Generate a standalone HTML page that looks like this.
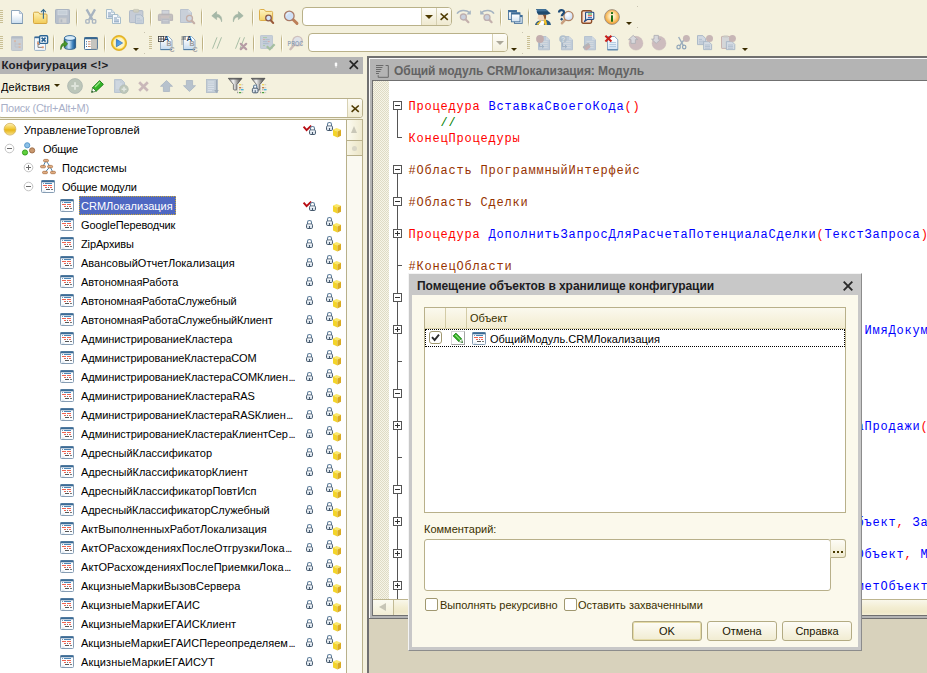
<!DOCTYPE html>
<html lang="ru"><head><meta charset="utf-8"><title>Конфигуратор</title>
<style>
html,body{margin:0;padding:0}
body{width:927px;height:673px;overflow:hidden;position:relative;background:#f4f1de;font-family:"Liberation Sans",sans-serif;font-size:11px;color:#000}
div,span,svg{position:absolute;box-sizing:border-box}
svg{overflow:visible}
.t{white-space:pre;line-height:19px;height:19px}
.n{transform:scaleY(1.07);transform-origin:0 50%}
.btn span{position:static;display:inline-block;transform:scaleY(1.07)}
.row{left:0;width:347px;height:19px}
.code{font-family:"Liberation Mono",monospace;font-size:12px;letter-spacing:0.8px;line-height:16px;height:16px;white-space:pre;left:408.5px}
.r{color:#ff0000}.b{color:#0000ff}.g{color:#008000}.br{color:#963200}
.code span{position:static}
.sep{width:1px;height:20px;background:#cfc8a8;box-shadow:1px 0 0 #fffef6}
.btn{height:20px;width:70px;border:1px solid #b3ab83;border-radius:3px;background:linear-gradient(#fdfcf6,#f1ecd2);text-align:center;line-height:18px;font-size:11px;top:621px;color:#1a1400}
.cb{width:13px;height:13px;border:1px solid #a09870;border-radius:2px;background:#fff}
</style></head><body>

<div style="left:0px;top:10px;width:3px;height:13px;background:repeating-linear-gradient(#c9bf94 0 1px,transparent 1px 2px)"></div>
<div style="left:0px;top:36px;width:3px;height:13px;background:repeating-linear-gradient(#c9bf94 0 1px,transparent 1px 2px)"></div>
<svg style="left:11px;top:10px" width="12" height="14" viewBox="0 0 12 14"><defs><linearGradient id="nd" x1="0" y1="0" x2="0" y2="1"><stop offset="0.3" stop-color="#ffffff"/><stop offset="1" stop-color="#c9ddef"/></linearGradient></defs><path d="M0.5 0.5H8.4L11.5 3.6V13.5H0.5Z" fill="url(#nd)" stroke="#8fa6bc" stroke-width="1"/><path d="M8.4 0.5V3.6H11.5Z" fill="#d6e2ee" stroke="#9fb3c6" stroke-width="0.8"/><path d="M0.5 13.5H11.5" stroke="#6d8ba6" stroke-width="1"/></svg>
<svg style="left:33px;top:9px" width="15" height="15" viewBox="0 0 15 15"><defs><linearGradient id="of" x1="0" y1="0" x2="0" y2="1"><stop offset="0" stop-color="#fdf2b6"/><stop offset="1" stop-color="#f2cb58"/></linearGradient></defs><path d="M0.5 4.4Q0.5 3.2 1.6 3.2H5.4L6.8 5H13Q14 5 14 6V13.6Q14 14.5 13 14.5H1.5Q0.5 14.5 0.5 13.6Z" fill="url(#of)" stroke="#d6a740" stroke-width="1"/><path d="M10.4 9.8V1" stroke="#356a8e" stroke-width="1.1"/><path d="M8 3.2L10.4 0.6L12.8 3.2" fill="none" stroke="#356a8e" stroke-width="1.1"/></svg>
<svg style="left:55px;top:9px" width="15" height="15" viewBox="0 0 15 15"><rect x="0.5" y="0.5" width="14" height="14" rx="0.8" fill="#b7bfcb" stroke="#aab4c1" stroke-width="1"/><rect x="3" y="1.5" width="9" height="4.2" fill="#c6cfd8" stroke="#d3dae1" stroke-width="0.8"/><rect x="4" y="9" width="7.5" height="5" fill="#cfd1d3" stroke="#c2c6cb" stroke-width="0.8"/><rect x="5.5" y="10.3" width="1.8" height="3" fill="#b3b9c2"/></svg>
<div style="left:76px;top:8px;width:1px;height:19px;background:linear-gradient(rgba(190,178,130,0),#bfb385 25%,#bfb385 75%,rgba(190,178,130,0))"></div><div style="left:77px;top:8px;width:1px;height:19px;background:linear-gradient(rgba(255,255,255,0),#fffef8 25%,#fffef8 75%,rgba(255,255,255,0))"></div>
<svg style="left:85px;top:9px" width="12" height="15" viewBox="0 0 12 15"><path d="M1.6 0.4L7.4 10.6M10 0.4L4.2 10.6" stroke="#a7b3c0" stroke-width="2.3" fill="none"/><rect x="0.8" y="10.6" width="3.4" height="3.6" rx="1" fill="none" stroke="#a7b3c0" stroke-width="1.3"/><rect x="7.4" y="10.6" width="3.4" height="3.6" rx="1" fill="none" stroke="#a7b3c0" stroke-width="1.3"/></svg>
<svg style="left:106px;top:9px" width="15" height="15" viewBox="0 0 15 15"><path d="M0.5 0.5H5.6L8.5 3.4V9.5H0.5Z" fill="#f2f6fb" stroke="#9fb8c6" stroke-width="0.9"/><path d="M5.6 0.5V3.4H8.5" fill="#dbe4ee" stroke="#9fb8c6" stroke-width="0.7"/><path d="M2 4H5M2 6H6.5M2 7.8H6.5" stroke="#6f8fb0" stroke-width="0.9"/><path d="M6.5 5.5H11.6L14.5 8.4V14.5H6.5Z" fill="#f6f9fd" stroke="#9fb8c6" stroke-width="0.9"/><path d="M11.6 5.5V8.4H14.5" fill="#dbe4ee" stroke="#9fb8c6" stroke-width="0.7"/><path d="M8 9H11M8 11H13M8 12.8H13" stroke="#6f8fb0" stroke-width="0.9"/></svg>
<svg style="left:129px;top:9px" width="15" height="15" viewBox="0 0 15 15"><rect x="0.5" y="1.6" width="13.4" height="12" rx="0.8" fill="#c6ccd6" stroke="#aab6c4" stroke-width="0.9"/><rect x="4.4" y="0.4" width="5.4" height="2.8" rx="0.8" fill="#cfcfc0" stroke="#bdbdae" stroke-width="0.6"/><path d="M6.6 5.8H11.8L14.4 8.4V14.6H6.6Z" fill="#cdd5de" stroke="#a9b8c8" stroke-width="0.9"/><path d="M8 9.4H11M8 11.2H13M8 13H13" stroke="#b5c2d0" stroke-width="0.8"/></svg>
<div style="left:150px;top:8px;width:1px;height:19px;background:linear-gradient(rgba(190,178,130,0),#bfb385 25%,#bfb385 75%,rgba(190,178,130,0))"></div><div style="left:151px;top:8px;width:1px;height:19px;background:linear-gradient(rgba(255,255,255,0),#fffef8 25%,#fffef8 75%,rgba(255,255,255,0))"></div>
<svg style="left:158px;top:10px" width="15" height="14" viewBox="0 0 15 14"><rect x="4" y="0.4" width="7" height="4.6" fill="#d0d3d9" stroke="#b9bdc6" stroke-width="0.8"/><path d="M1.6 4.2H13.4Q14.6 4.2 14.6 5.6V10.4H0.4V5.6Q0.4 4.2 1.6 4.2Z" fill="#c4bfc0" stroke="#b0acb0" stroke-width="0.8"/><path d="M3 7H12" stroke="#d8c8c0" stroke-width="0.8"/><rect x="11.4" y="6.6" width="1" height="1" fill="#a8c8a8"/><rect x="3.6" y="9" width="7.8" height="4.4" fill="#b2b6bf" stroke="#c0c3ca" stroke-width="0.8"/><path d="M4.4 10.6H10.6M4.4 12H10.6" stroke="#d9dbe0" stroke-width="0.7"/></svg>
<svg style="left:180px;top:9px" width="16" height="16" viewBox="0 0 16 16"><path d="M0.5 0.5H8.4L11.5 3.6V13.5H0.5Z" fill="#c9d0d9" stroke="#b5c0cc" stroke-width="0.9"/><path d="M8.4 0.5V3.6H11.5Z" fill="#d9dfe6"/><path d="M11.58 11.47L14.2 14.2" stroke="#c4aea6" stroke-width="2.2" stroke-linecap="round"/><circle cx="9.5" cy="9.3" r="3" fill="#cfd6e0" stroke="#c4aea6" stroke-width="1.3"/></svg>
<div style="left:201px;top:8px;width:1px;height:19px;background:linear-gradient(rgba(190,178,130,0),#bfb385 25%,#bfb385 75%,rgba(190,178,130,0))"></div><div style="left:202px;top:8px;width:1px;height:19px;background:linear-gradient(rgba(255,255,255,0),#fffef8 25%,#fffef8 75%,rgba(255,255,255,0))"></div>
<svg style="left:211px;top:11px" width="12" height="12" viewBox="0 0 12 12"><path d="M5.6 0.6L0.8 4.8L5.6 8.6V6C8.2 5.8 9.8 7.2 10.6 10.8C11.2 6 9.4 3.6 5.6 3.2Z" fill="#a5b8a7" stroke="#9db09f" stroke-width="0.6"/></svg>
<svg style="left:232px;top:11px" width="12" height="12" viewBox="0 0 12 12"><path d="M6.4 0.6L11.2 4.8L6.4 8.6V6C3.8 5.8 2.2 7.2 1.4 10.8C0.8 6 2.6 3.6 6.4 3.2Z" fill="#a5b8a7" stroke="#9db09f" stroke-width="0.6"/></svg>
<div style="left:252px;top:8px;width:1px;height:19px;background:linear-gradient(rgba(190,178,130,0),#bfb385 25%,#bfb385 75%,rgba(190,178,130,0))"></div><div style="left:253px;top:8px;width:1px;height:19px;background:linear-gradient(rgba(255,255,255,0),#fffef8 25%,#fffef8 75%,rgba(255,255,255,0))"></div>
<svg style="left:259px;top:9px" width="16" height="16" viewBox="0 0 16 16"><defs><linearGradient id="fs" x1="0" y1="0" x2="0" y2="1"><stop offset="0" stop-color="#fdf4c4"/><stop offset="1" stop-color="#f4d36a"/></linearGradient></defs><path d="M0.5 1.4Q0.5 0.5 1.4 0.5H5.2L6.6 2.4H12.6Q13.6 2.4 13.6 3.4V10.6Q13.6 11.5 12.6 11.5H1.4Q0.5 11.5 0.5 10.6Z" fill="url(#fs)" stroke="#dcae4a" stroke-width="1"/><path d="M11.42 11.04L14.2 14" stroke="#9a5a3a" stroke-width="2" stroke-linecap="round"/><circle cx="9.5" cy="9" r="2.8" fill="#d6e4f6" stroke="#8a5a4a" stroke-width="1.3"/></svg>
<svg style="left:284px;top:10px" width="15" height="15" viewBox="0 0 15 15"><path d="M8.74 9.25L13 13.4" stroke="#bd7f58" stroke-width="2.9" stroke-linecap="round"/><circle cx="5.3" cy="5.9" r="4.8" fill="#cfe0f6" stroke="#a97a66" stroke-width="1.3"/><path d="M2.6 5.4C2.8 3.8 4 2.8 5.6 2.8" fill="none" stroke="#f4f9ff" stroke-width="1"/></svg>
<div style="left:302px;top:7px;width:150px;height:19px;border:1px solid #b9b189;border-radius:4px;background:#fff"></div>
<div style="left:421px;top:8px;width:30px;height:17px;border-left:1px solid #d6d0b2;background:linear-gradient(#fdfcf7,#efe9cf);border-radius:0 3px 3px 0"></div>
<div style="left:436px;top:8px;width:1px;height:17px;background:#d6d0b2"></div>
<div style="left:425px;top:15px;width:0;height:0;border-left:4px solid transparent;border-right:4px solid transparent;border-top:4px solid #4e3a00"></div>
<svg style="left:440px;top:13px" width="8.4" height="7.4" viewBox="0 0 8.4 7.4"><path d="M0.6 0.5L7.8 6.9M7.8 0.5L0.6 6.9" stroke="#4e3a00" stroke-width="1.6" fill="none"/></svg>
<svg style="left:456px;top:9px" width="16" height="15" viewBox="0 0 16 15"><path d="M1 4.6C3.6 0.8 10 0.6 13.6 3.6" fill="none" stroke="#a5b3c1" stroke-width="1.5"/><path d="M14.8 1.2V5.6H10.4Z" fill="#a5b3c1"/><path d="M9.48 10.16L12.4 13.2" stroke="#c4b0ac" stroke-width="2.2" stroke-linecap="round"/><circle cx="7.4" cy="8" r="3" fill="#c9d0dc" stroke="#bfb0b0" stroke-width="1.3"/></svg>
<svg style="left:479px;top:9px" width="16" height="15" viewBox="0 0 16 15"><path d="M15 4.6C12.4 0.8 6 0.6 2.4 3.6" fill="none" stroke="#a5b3c1" stroke-width="1.5"/><path d="M1.2 1.2V5.6H5.6Z" fill="#a5b3c1"/><path d="M10.08 10.57L12.6 13.2" stroke="#c4b0ac" stroke-width="2.2" stroke-linecap="round"/><circle cx="8" cy="8.4" r="3" fill="#c9d0dc" stroke="#bfb0b0" stroke-width="1.3"/></svg>
<div style="left:500px;top:8px;width:1px;height:19px;background:linear-gradient(rgba(190,178,130,0),#bfb385 25%,#bfb385 75%,rgba(190,178,130,0))"></div><div style="left:501px;top:8px;width:1px;height:19px;background:linear-gradient(rgba(255,255,255,0),#fffef8 25%,#fffef8 75%,rgba(255,255,255,0))"></div>
<svg style="left:508px;top:10px" width="15" height="14" viewBox="0 0 15 14"><defs><linearGradient id="wg" x1="0" y1="0" x2="0" y2="1"><stop offset="0.2" stop-color="#ffffff"/><stop offset="1" stop-color="#cfe0f0"/></linearGradient></defs><rect x="6.4" y="5.4" width="7.8" height="8" fill="url(#wg)" stroke="#4a739c" stroke-width="0.9"/><rect x="6.4" y="5.2" width="7.8" height="1.9" fill="#3a6a96"/><rect x="0.5" y="0.5" width="8" height="9" fill="url(#wg)" stroke="#4a739c" stroke-width="0.9"/><rect x="0.5" y="0.3" width="8" height="1.9" fill="#3a6a96"/><rect x="3.4" y="2.8" width="8.6" height="9" fill="url(#wg)" stroke="#4a739c" stroke-width="0.9"/><rect x="3.4" y="2.5999999999999996" width="8.6" height="1.9" fill="#3a6a96"/></svg>
<div style="left:528px;top:8px;width:1px;height:19px;background:linear-gradient(rgba(190,178,130,0),#bfb385 25%,#bfb385 75%,rgba(190,178,130,0))"></div><div style="left:529px;top:8px;width:1px;height:19px;background:linear-gradient(rgba(255,255,255,0),#fffef8 25%,#fffef8 75%,rgba(255,255,255,0))"></div>
<svg style="left:535px;top:8px" width="16" height="17" viewBox="0 0 16 17"><path d="M0 17C0.6 13.8 3.4 12.6 6 12.2L10.4 11.6C13.2 12.4 15.6 13.8 16 17Z" fill="#2a5a82"/><path d="M3.6 17L5.2 13L9.2 12.6L8.8 17Z" fill="#ffffff"/><path d="M8.2 11.6L10.8 11.2L12.2 16.8L9.8 17Z" fill="#f4c22a"/><path d="M1.4 16L5.4 12.6L6.2 13.6L3.2 17Z" fill="#f4c22a"/><ellipse cx="6.6" cy="8.8" rx="3.7" ry="3.9" fill="#f2d4b6"/><path d="M3 9.6L2.4 10.6L3.4 10.8Z" fill="#e6b898"/><path d="M7.6 6.2L11.2 6.4L11 10.4L9.6 11.6L8.8 8.6Z" fill="#8a5230"/><path d="M1 1.2L10.5 1L15.8 5.6L12 6.7L3.4 6.7L1.2 3.4Z" fill="#1f4a6e"/><path d="M1 1.2L10.5 1L13.2 3.3L2.2 3.4Z" fill="#3f7098"/><path d="M1.3 2V5.4" stroke="#eef2f6" stroke-width="0.9"/></svg>
<svg style="left:558px;top:9px" width="16" height="16" viewBox="0 0 16 16"><defs><radialGradient id="qg" cx="0.4" cy="0.35" r="0.7"><stop offset="0" stop-color="#ffffff"/><stop offset="1" stop-color="#c4d8f2"/></radialGradient></defs><path d="M7.42 10.41L4 14.2" stroke="#c9a080" stroke-width="2.6" stroke-linecap="round"/><circle cx="10.5" cy="7" r="4.6" fill="url(#qg)" stroke="#b08262" stroke-width="1.3"/><path d="M1 3.4C1 0.4 6 0.4 6 3.2C6 5 3.8 5.2 3.7 7.2" fill="none" stroke="#1f4c78" stroke-width="2.2"/><rect x="2.5" y="9" width="2.3" height="2.3" transform="rotate(45 3.65 10.15)" fill="#1f4c78"/></svg>
<svg style="left:581px;top:10px" width="14" height="14" viewBox="0 0 14 14"><rect x="0.8" y="0.8" width="9.8" height="12.4" rx="1.4" fill="#fce2d2" stroke="#8c4c28" stroke-width="1.4"/><path d="M5.4 2.2H12Q12.8 2.2 12.8 3V8.6Q12.8 9.4 12 9.4H6.6L3.2 11.8L4.8 9.2Q4.6 9 4.6 8.6V3Q4.6 2.2 5.4 2.2Z" fill="#f8fbfe" stroke="#1f4a84" stroke-width="1.1"/><path d="M6.8 4H11" stroke="#2a9a2a" stroke-width="1"/><path d="M6.8 5.8H11" stroke="#e03a2a" stroke-width="1"/><path d="M6.8 7.6H11" stroke="#3a6ab8" stroke-width="1"/></svg>
<svg style="left:604px;top:9px" width="16" height="16" viewBox="0 0 16 16"><defs><radialGradient id="ig" cx="0.5" cy="0.45" r="0.6"><stop offset="0" stop-color="#fffdf4"/><stop offset="0.35" stop-color="#fde4b0"/><stop offset="0.8" stop-color="#f4a83a"/><stop offset="1" stop-color="#e8922a"/></radialGradient></defs><circle cx="8" cy="8" r="7.4" fill="url(#ig)" stroke="#9a9088" stroke-width="0.9"/><rect x="7" y="6.2" width="2" height="6.6" rx="0.4" fill="#1a6e14"/><rect x="7" y="3" width="2" height="2" rx="0.5" fill="#1a6e14"/></svg>
<div style="left:626px;top:22px;width:0;height:0;border-left:3px solid transparent;border-right:3px solid transparent;border-top:3px solid #3a2c00"></div>
<div style="left:637px;top:6px;width:1px;height:1px;background:#c9c4b0"></div>
<div style="left:637px;top:27px;width:1px;height:1px;background:#c9c4b0"></div>
<svg style="left:11px;top:36px" width="12" height="15" viewBox="0 0 12 15"><rect x="0.5" y="0.5" width="11" height="14" rx="0.8" fill="#c9ced4" stroke="#bcc3ca" stroke-width="0.9"/><rect x="0.5" y="0.5" width="11" height="2" fill="#b4bcc6"/><path d="M4 5V11H8M4 8H8" stroke="#bfc2c8" stroke-width="0.9" fill="none"/><rect x="3" y="4.2" width="2" height="1.8" fill="#d6b8a8"/><rect x="7.6" y="7.2" width="2" height="1.8" fill="#d6b8a8"/><rect x="7.6" y="10.2" width="2" height="1.8" fill="#d6b8a8"/></svg>
<svg style="left:34px;top:35px" width="15" height="16" viewBox="0 0 15 16"><rect x="0.5" y="1.8" width="11" height="13.6" rx="0.8" fill="#f4f8fc" stroke="#8ea8c0" stroke-width="0.9"/><rect x="0.5" y="1.6" width="4.6" height="1.6" fill="#3a6a96"/><path d="M4 6V12.4H8M4 9.4H6" stroke="#777" stroke-width="0.9" fill="none"/><rect x="3" y="7.4" width="2" height="1.8" fill="#e0946a"/><rect x="7.8" y="11.4" width="2" height="1.8" fill="#e0946a"/><rect x="5.6" y="0.8" width="8" height="7.6" rx="1" fill="#ffffff" stroke="#2a6494" stroke-width="1.4"/><path d="M7.6 2.6L11.6 6.6M11.6 2.6L7.6 6.6" stroke="#2a6494" stroke-width="1.7"/></svg>
<div style="left:53px;top:34px;width:1px;height:19px;background:linear-gradient(rgba(190,178,130,0),#bfb385 25%,#bfb385 75%,rgba(190,178,130,0))"></div><div style="left:54px;top:34px;width:1px;height:19px;background:linear-gradient(rgba(255,255,255,0),#fffef8 25%,#fffef8 75%,rgba(255,255,255,0))"></div>
<svg style="left:60px;top:35px" width="16" height="16" viewBox="0 0 16 16"><defs><linearGradient id="db" x1="0" y1="0" x2="1" y2="0"><stop offset="0" stop-color="#2f6ea8"/><stop offset="0.4" stop-color="#cfe8fb"/><stop offset="0.75" stop-color="#3b80bc"/><stop offset="1" stop-color="#1d4f82"/></linearGradient></defs><path d="M4.4 3V12.6C4.4 15 15.6 15 15.6 12.6V3Z" fill="url(#db)" stroke="#1f527f" stroke-width="0.8"/><ellipse cx="10" cy="3" rx="5.6" ry="2.4" fill="#d9edfb" stroke="#2a6294" stroke-width="0.9"/><path d="M0.8 14.6C0.4 10.4 1.8 8.4 4.2 8V5.6L7.6 9L4.2 12.2V10.2C2.6 10.4 1.6 11.6 0.8 14.6Z" fill="#4c9a2a" stroke="#2f7218" stroke-width="0.7"/></svg>
<svg style="left:84px;top:37px" width="14" height="13" viewBox="0 0 14 13"><rect x="0.5" y="0.5" width="13" height="12" rx="0.8" fill="#ffffff" stroke="#4a7298" stroke-width="1"/><rect x="0.5" y="0.4" width="13" height="1.9" fill="#36668f"/><rect x="7.4" y="2.4" width="5.6" height="9.6" fill="#c6c5c0" stroke="#a9a9a4" stroke-width="0.5"/><rect x="2" y="4.2" width="1" height="1" fill="#3a6a9a"/><rect x="4" y="4.2" width="2.6" height="1" fill="#c88a6a"/><rect x="2" y="6.6" width="1" height="1" fill="#3a6a9a"/><rect x="4" y="6.6" width="2.6" height="1" fill="#c88a6a"/><rect x="2" y="9" width="1" height="1" fill="#3a6a9a"/><rect x="4" y="9" width="2.6" height="1" fill="#c88a6a"/></svg>
<div style="left:104px;top:34px;width:1px;height:19px;background:linear-gradient(rgba(190,178,130,0),#bfb385 25%,#bfb385 75%,rgba(190,178,130,0))"></div><div style="left:105px;top:34px;width:1px;height:19px;background:linear-gradient(rgba(255,255,255,0),#fffef8 25%,#fffef8 75%,rgba(255,255,255,0))"></div>
<svg style="left:111px;top:35px" width="16" height="16" viewBox="0 0 16 16"><defs><radialGradient id="pg" cx="0.5" cy="0.5" r="0.5"><stop offset="0" stop-color="#fffdf0"/><stop offset="0.68" stop-color="#fdf2b8"/><stop offset="0.84" stop-color="#f2c62c"/><stop offset="1" stop-color="#dca212"/></radialGradient><linearGradient id="pt" x1="0" y1="0" x2="1" y2="1"><stop offset="0" stop-color="#2f7fd6"/><stop offset="1" stop-color="#7fc0f2"/></linearGradient></defs><circle cx="8" cy="8" r="7.6" fill="url(#pg)" stroke="#d9a81e" stroke-width="0.7"/><path d="M5.4 4.2L11.6 8L5.4 11.8Z" fill="url(#pt)" stroke="#2a6cb6" stroke-width="0.7" stroke-linejoin="round"/></svg>
<div style="left:133px;top:48px;width:0;height:0;border-left:3px solid transparent;border-right:3px solid transparent;border-top:3px solid #3a2c00"></div>
<div style="left:144px;top:32px;width:1px;height:1px;background:#c9c4b0"></div>
<div style="left:144px;top:53px;width:1px;height:1px;background:#c9c4b0"></div>
<div style="left:149px;top:36px;width:3px;height:13px;background:repeating-linear-gradient(#c9bf94 0 1px,transparent 1px 2px)"></div>
<svg style="left:158px;top:35px" width="17" height="17" viewBox="0 0 17 17"><defs><linearGradient id="ab158" x1="0" y1="0" x2="0" y2="1"><stop offset="0.2" stop-color="#ffffff"/><stop offset="1" stop-color="#c4daee"/></linearGradient></defs><path d="M2.5 1.5H10.5L14 5V14.5H2.5Z" fill="url(#ab158)" stroke="#8ca6c0" stroke-width="0.9"/><path d="M2.5 14.6H14" stroke="#4f7ca4" stroke-width="1.1"/><g transform="translate(0,1)"><rect x="0.4" y="0.4" width="5.2" height="5.2" fill="#ffffff" stroke="#3a3a3a" stroke-width="0.8"/><path d="M0.4 3H5.6" stroke="#3a3a3a" stroke-width="0.8"/><path d="M3 0.4V5.6" stroke="#3a3a3a" stroke-width="0.8"/></g><text x="5.6" y="5.6" font-family="Liberation Sans,sans-serif" font-size="7.6" font-weight="bold" fill="#153e66">A</text><text x="8.6" y="11.4" font-family="Liberation Sans,sans-serif" font-size="7" font-weight="bold" fill="#9c9c9c">B</text><text x="11.6" y="16.6" font-family="Liberation Sans,sans-serif" font-size="7" font-weight="bold" fill="#a6a6a6">C</text></svg>
<svg style="left:181px;top:35px" width="17" height="17" viewBox="0 0 17 17"><defs><linearGradient id="ab181" x1="0" y1="0" x2="0" y2="1"><stop offset="0.2" stop-color="#ffffff"/><stop offset="1" stop-color="#c4daee"/></linearGradient></defs><path d="M2.5 1.5H10.5L14 5V14.5H2.5Z" fill="url(#ab181)" stroke="#8ca6c0" stroke-width="0.9"/><path d="M2.5 14.6H14" stroke="#4f7ca4" stroke-width="1.1"/><g transform="translate(0,1)"><path d="M0.5 1H5M0.5 3H5" stroke="#444" stroke-width="0.9"/><path d="M1 3V9" stroke="#999" stroke-width="0.8"/></g><text x="5.6" y="5.6" font-family="Liberation Sans,sans-serif" font-size="7.6" font-weight="bold" fill="#153e66">A</text><text x="8.6" y="11.4" font-family="Liberation Sans,sans-serif" font-size="7" font-weight="bold" fill="#9c9c9c">B</text><text x="11.6" y="16.6" font-family="Liberation Sans,sans-serif" font-size="7" font-weight="bold" fill="#a6a6a6">C</text></svg>
<div style="left:202px;top:34px;width:1px;height:19px;background:linear-gradient(rgba(190,178,130,0),#bfb385 25%,#bfb385 75%,rgba(190,178,130,0))"></div><div style="left:203px;top:34px;width:1px;height:19px;background:linear-gradient(rgba(255,255,255,0),#fffef8 25%,#fffef8 75%,rgba(255,255,255,0))"></div>
<svg style="left:212px;top:37px" width="10" height="12" viewBox="0 0 10 12"><path d="M5 0.3L0.5 11.7M9.5 0.3L5 11.7" stroke="#a9bea6" stroke-width="1"/></svg>
<svg style="left:235px;top:37px" width="13" height="14" viewBox="0 0 13 14"><path d="M5 0.3L0.5 11.7M9.5 0.3L5 11.7" stroke="#a9bea6" stroke-width="1"/><path d="M5.8 6.8L11.2 12.2M11.2 6.8L5.8 12.2" stroke="#b59ba4" stroke-width="2.2" stroke-linecap="round"/></svg>
<div style="left:253px;top:34px;width:1px;height:19px;background:linear-gradient(rgba(190,178,130,0),#bfb385 25%,#bfb385 75%,rgba(190,178,130,0))"></div><div style="left:254px;top:34px;width:1px;height:19px;background:linear-gradient(rgba(255,255,255,0),#fffef8 25%,#fffef8 75%,rgba(255,255,255,0))"></div>
<svg style="left:260px;top:35px" width="16" height="16" viewBox="0 0 16 16"><rect x="0.5" y="0.5" width="12" height="13" rx="0.6" fill="#c7cfd9" stroke="#bcc6d0" stroke-width="0.9"/><path d="M3 2.6H7" stroke="#a8c8a0" stroke-width="0.9"/><path d="M3 4.6H5" stroke="#d8a0a0" stroke-width="0.9"/><path d="M5.4 4.6H9.6" stroke="#a9b9cc" stroke-width="0.9"/><path d="M3 6.6H7.4" stroke="#a9b9cc" stroke-width="0.9"/><path d="M7.8 6.6H9.6" stroke="#d8a0a0" stroke-width="0.9"/><path d="M3 8.6H8.6" stroke="#a9b9cc" stroke-width="0.9"/><path d="M3 10.6H5" stroke="#a8c8a0" stroke-width="0.9"/><path d="M6.8 11.2L9.8 14.2L14.6 9.2" fill="none" stroke="#a4bfa0" stroke-width="2.3"/></svg>
<div style="left:281px;top:34px;width:1px;height:19px;background:linear-gradient(rgba(190,178,130,0),#bfb385 25%,#bfb385 75%,rgba(190,178,130,0))"></div><div style="left:282px;top:34px;width:1px;height:19px;background:linear-gradient(rgba(255,255,255,0),#fffef8 25%,#fffef8 75%,rgba(255,255,255,0))"></div>
<svg style="left:287px;top:35px" width="17" height="16" viewBox="0 0 17 16"><path d="M7.40 9.63L3.4 14.2" stroke="#cdbcb6" stroke-width="2.4" stroke-linecap="round"/><circle cx="10.5" cy="6.1" r="4.7" fill="#dfe2e8" stroke="#cfc0bc" stroke-width="1.4"/><text x="0.6" y="11.4" font-family="Liberation Sans,sans-serif" font-size="7" font-weight="bold" fill="#8a9cb2" fill-opacity="0.9" textLength="15.6" lengthAdjust="spacingAndGlyphs">PROC</text></svg>
<div style="left:308px;top:33px;width:200px;height:19px;border:1px solid #b9b189;border-radius:4px;background:#fff"></div>
<div style="left:492px;top:34px;width:15px;height:17px;border-left:1px solid #d6d0b2;background:linear-gradient(#fefdf9,#f4f0dc);border-radius:0 3px 3px 0"></div>
<div style="left:496px;top:41px;width:0;height:0;border-left:4px solid transparent;border-right:4px solid transparent;border-top:4px solid #aca899"></div>
<div style="left:511px;top:48px;width:0;height:0;border-left:3px solid transparent;border-right:3px solid transparent;border-top:3px solid #3a2c00"></div>
<div style="left:522px;top:32px;width:1px;height:1px;background:#c9c4b0"></div>
<div style="left:522px;top:53px;width:1px;height:1px;background:#c9c4b0"></div>
<div style="left:527px;top:36px;width:3px;height:13px;background:repeating-linear-gradient(#c9bf94 0 1px,transparent 1px 2px)"></div>
<svg style="left:535px;top:35px" width="16" height="16" viewBox="0 0 16 16"><path d="M3.5 1.5H11L14.5 5V14.8H3.5Z" fill="#c0ccd9" stroke="#b3c0ce" stroke-width="0.9"/><path d="M11 1.5V5H14.5Z" fill="#d0d9e2"/><path d="M5.4 6.4H12.6M5.4 8.4H12.6M5.4 10.4H12.6M5.4 12.4H12.6" stroke="#d9dde0" stroke-width="0.8"/><path d="M4.4 8V11.6H8.6M7 10L8.8 11.6L7 13.2" fill="none" stroke="#9fb0c2" stroke-width="1"/><circle cx="5" cy="4" r="3.9" fill="#c3adad"/></svg>
<svg style="left:558px;top:35px" width="16" height="16" viewBox="0 0 16 16"><path d="M3.5 1.5H11L14.5 5V14.8H3.5Z" fill="#c0ccd9" stroke="#b3c0ce" stroke-width="0.9"/><path d="M11 1.5V5H14.5Z" fill="#d0d9e2"/><path d="M5.4 6.4H12.6M5.4 8.4H12.6M5.4 10.4H12.6M5.4 12.4H12.6" stroke="#d9dde0" stroke-width="0.8"/><path d="M4.4 8V11.6H8.6M7 10L8.8 11.6L7 13.2" fill="none" stroke="#9fb0c2" stroke-width="1"/><circle cx="5" cy="4" r="3.8" fill="#b2c0cc"/><text x="3" y="6.6" font-family="Liberation Sans,sans-serif" font-size="7" font-weight="bold" fill="#dde4ea">?</text></svg>
<svg style="left:581px;top:35px" width="16" height="16" viewBox="0 0 16 16"><path d="M3.5 1.5H11L14.5 5V14.8H3.5Z" fill="#c0ccd9" stroke="#b3c0ce" stroke-width="0.9"/><path d="M11 1.5V5H14.5Z" fill="#d0d9e2"/><path d="M5.4 6.4H12.6M5.4 8.4H12.6M5.4 10.4H12.6M5.4 12.4H12.6" stroke="#d9dde0" stroke-width="0.8"/><path d="M3.4 12.2L7.2 9.6" stroke="#b3b3b7" stroke-width="3.2" stroke-linecap="round"/><path d="M5.4 13.6L8 11.6" stroke="#c6aeaf" stroke-width="3" stroke-linecap="round"/></svg>
<svg style="left:604px;top:35px" width="15" height="16" viewBox="0 0 15 16"><defs><linearGradient id="rx" x1="0" y1="0" x2="0" y2="1"><stop offset="0.2" stop-color="#ffffff"/><stop offset="1" stop-color="#cfe2f4"/></linearGradient></defs><path d="M3.5 1.5H10.6L13.8 4.7V14.8H3.5Z" fill="url(#rx)" stroke="#7f9fbe" stroke-width="0.9"/><path d="M5.4 7.6H12M5.4 9.6H12M5.4 11.6H12" stroke="#a9c3dc" stroke-width="0.9"/><path d="M3.5 14.8H13.8" stroke="#4f7ca4" stroke-width="1"/><path d="M1.4 0.8L7.4 6.6M7.4 0.8L1.4 6.6" stroke="#c8201c" stroke-width="2.1"/></svg>
<svg style="left:628px;top:35px" width="16" height="16" viewBox="0 0 16 16"><circle cx="8" cy="8.2" r="6.9" fill="#cdbcbe" stroke="#c4b4b6" stroke-width="0.5"/><path d="M5.2 0.4L9.8 4.6H7.4V8.4H3V4.6H0.6Z" fill="#d8d8dc" stroke="#b0b0b6" stroke-width="0.9"/></svg>
<svg style="left:651px;top:35px" width="16" height="16" viewBox="0 0 16 16"><circle cx="8" cy="8.2" r="6.9" fill="#cdbcbe" stroke="#c4b4b6" stroke-width="0.5"/><path d="M5.2 8.4L9.8 4.2H7.4V0.4H3V4.2H0.6Z" fill="#d8d8dc" stroke="#b0b0b6" stroke-width="0.9"/></svg>
<svg style="left:676px;top:35px" width="16" height="16" viewBox="0 0 16 16"><path d="M2.6 2L7.4 10.6M8.6 4L3.8 10.6" stroke="#9caebd" stroke-width="1.4" fill="none"/><ellipse cx="2.6" cy="12" rx="1.7" ry="1.9" fill="none" stroke="#8ea4b8" stroke-width="1.2"/><ellipse cx="8.2" cy="12" rx="1.7" ry="1.9" fill="none" stroke="#8ea4b8" stroke-width="1.2"/><circle cx="10.4" cy="3.6" r="3.5" fill="#c7b6b6"/></svg>
<svg style="left:697px;top:35px" width="16" height="16" viewBox="0 0 16 16"><path d="M0.5 0.6H5.8L8.6 3.4V9.6H0.5Z" fill="#d2d9e1" stroke="#a6b5c5" stroke-width="0.9"/><path d="M2 4.4H5M2 6.2H7M2 8H7" stroke="#a9b9ca" stroke-width="0.8"/><path d="M6.6 6.6H11.8L14.6 9.4V14.6H6.6Z" fill="#d4dbe3" stroke="#a6b5c5" stroke-width="0.9"/><path d="M8 10H13M8 11.6H13M8 13.2H13" stroke="#a9b9ca" stroke-width="0.8"/><circle cx="12.5" cy="3.6" r="3.5" fill="#c7b6b6"/></svg>
<svg style="left:721px;top:35px" width="16" height="16" viewBox="0 0 16 16"><rect x="0.5" y="1.4" width="8.2" height="12" rx="0.6" fill="#d4d6d8" stroke="#c4aeaa" stroke-width="0.9"/><rect x="2.4" y="0.4" width="4.6" height="2.2" rx="0.6" fill="#c9c9c4"/><path d="M5.4 6.6H11L13.8 9.4V14.6H5.4Z" fill="#d4dbe3" stroke="#a6b5c5" stroke-width="0.9"/><path d="M7 10H12M7 11.6H12M7 13.2H12" stroke="#a9b9ca" stroke-width="0.8"/><circle cx="11.4" cy="3.6" r="3.5" fill="#c7b6b6"/></svg>
<div style="left:742px;top:48px;width:0;height:0;border-left:3px solid transparent;border-right:3px solid transparent;border-top:3px solid #3a2c00"></div>
<div style="left:0;top:57px;width:363px;height:17px;background:#b4b4b4"></div>
<span class="t" style="left:1.4px;top:56px;font-weight:bold;font-size:11.5px;letter-spacing:0.19px;color:#1e1e26">Конфигурация &lt;!&gt;</span>
<svg style="left:334px;top:62px" width="4" height="7" viewBox="0 0 4 7"><rect x="0.8" y="0.4" width="2.4" height="4" rx="1" fill="#fafafa"/><rect x="1.6" y="4.4" width="0.9" height="1.6" fill="#e4e4e4"/></svg>
<svg style="left:348.5px;top:60px" width="9.6" height="9.6" viewBox="0 0 9.6 9.6"><path d="M0.7 0.7L8.9 8.9M8.9 0.7L0.7 8.9" stroke="#262626" stroke-width="1.7" fill="none"/></svg>
<span class="t n" style="left:1px;top:78px;font-size:11px;letter-spacing:0.12px">Действия</span>
<div style="left:54px;top:84px;width:0;height:0;border-left:3px solid transparent;border-right:3px solid transparent;border-top:3px solid #3a2c00"></div>
<svg style="left:67px;top:78px" width="16" height="16" viewBox="0 0 16 16"><circle cx="8" cy="8" r="7.4" fill="#bcc6b9" stroke="#aab4ae" stroke-width="0.8"/><path d="M8 4.3V11.7M4.3 8H11.7" stroke="#dde3da" stroke-width="2"/></svg>
<svg style="left:91px;top:80px" width="13" height="13" viewBox="0 0 13 13"><path d="M8.6 0.6L12.4 4.4L5.2 11.2L1.6 7.6Z" fill="#34b428" stroke="#1c7a18" stroke-width="0.9"/><path d="M9 2L4 7" stroke="#9ae88a" stroke-width="1.2"/><path d="M1.6 7.6L5.2 11.2L0.6 12.4Z" fill="#ffffff" stroke="#1c6a18" stroke-width="0.7"/><path d="M0.5 12.5L2.2 12.1L0.9 10.8Z" fill="#103810"/></svg>
<svg style="left:114px;top:79px" width="14" height="15" viewBox="0 0 14 15"><path d="M0.5 0.5H7.5L10.5 3.5V13.5H0.5Z" fill="#c6d0da" stroke="#b6c2ce" stroke-width="0.9"/><path d="M2 3H6M2 5H8M2 7H8M2 9H6" stroke="#dbe2ea" stroke-width="0.8"/><circle cx="10" cy="10.2" r="4.3" fill="#bcc6b9" stroke="#aeb8ac" stroke-width="0.6"/><path d="M10 7.8V12.6M7.6 10.2H12.4" stroke="#e2e7e0" stroke-width="1.5"/></svg>
<svg style="left:138px;top:81px" width="11" height="11" viewBox="0 0 11 11"><path d="M1.2 1.2L9.8 9.8M9.8 1.2L1.2 9.8" stroke="#c9b8b9" stroke-width="2.7" fill="none"/></svg>
<svg style="left:160px;top:80px" width="13" height="12" viewBox="0 0 13 12"><path d="M6.5 0.5L12.5 6.3H9.6V11.5H3.4V6.3H0.5Z" fill="#b7c2cd" stroke="#a9b5c2" stroke-width="0.8"/></svg>
<svg style="left:183px;top:80px" width="13" height="12" viewBox="0 0 13 12"><path d="M6.5 11.5L12.5 5.7H9.6V0.5H3.4V5.7H0.5Z" fill="#b7c2cd" stroke="#a9b5c2" stroke-width="0.8"/></svg>
<svg style="left:206px;top:79px" width="14" height="15" viewBox="0 0 14 15"><rect x="0.5" y="0.5" width="11" height="13" fill="#c4ced8" stroke="#b3bec9" stroke-width="0.9"/><path d="M2 3H8M2 5.2H8M2 7.4H8M2 9.6H8M2 11.6H6" stroke="#dce3ea" stroke-width="0.9"/><path d="M10.5 1V12" stroke="#9fabb8" stroke-width="1.2"/><path d="M8.2 11L10.5 14.2L12.8 11Z" fill="#9fabb8"/></svg>
<svg style="left:228px;top:78px" width="16" height="16" viewBox="0 0 16 16"><defs><linearGradient id="fg228" x1="0" y1="0" x2="1" y2="0"><stop offset="0" stop-color="#8a8a8a"/><stop offset="0.35" stop-color="#f4f4f4"/><stop offset="0.7" stop-color="#8c8c8c"/><stop offset="1" stop-color="#4a4a4a"/></linearGradient></defs><path d="M0.3 0.3H14L9 6.4V11.4C9 12.3 5.4 12.3 5.4 11.4V6.4Z" fill="url(#fg228)" stroke="#4c4c4c" stroke-width="0.7"/><path d="M0.3 0.3H14L13 1.5H1.3Z" fill="#5a5a5a"/><path d="M9.5 6V15" stroke="#c9c9c9" stroke-width="0.7"/><rect x="11" y="6.2" width="2.2" height="1.1" fill="#f2cf3a"/><rect x="13.4" y="6.2" width="1.8" height="1" fill="#c9c9c9"/><rect x="11" y="9.2" width="2.2" height="1.1" fill="#b8642a"/><rect x="13.4" y="9.2" width="1.8" height="1" fill="#c9c9c9"/><rect x="11.4" y="11.2" width="1" height="1.1" fill="#888"/><rect x="13" y="11.2" width="2.6" height="1.1" fill="#1ea4e0"/><rect x="9.2" y="14.1" width="1" height="1.1" fill="#888"/><rect x="11" y="14.1" width="2.2" height="1.1" fill="#3a9a2a"/><rect x="13.4" y="14.1" width="1.8" height="1" fill="#c9c9c9"/></svg>
<svg style="left:251px;top:78px" width="16" height="16" viewBox="0 0 16 16"><defs><linearGradient id="fg251" x1="0" y1="0" x2="1" y2="0"><stop offset="0" stop-color="#8a8a8a"/><stop offset="0.35" stop-color="#f4f4f4"/><stop offset="0.7" stop-color="#8c8c8c"/><stop offset="1" stop-color="#4a4a4a"/></linearGradient></defs><path d="M0.3 0.3H14L9 6.4V11.4C9 12.3 5.4 12.3 5.4 11.4V6.4Z" fill="url(#fg251)" stroke="#4c4c4c" stroke-width="0.7"/><path d="M0.3 0.3H14L13 1.5H1.3Z" fill="#5a5a5a"/><path d="M9.5 6V15" stroke="#c9c9c9" stroke-width="0.7"/><rect x="11" y="6.2" width="2.2" height="1.1" fill="#f2cf3a"/><rect x="13.4" y="6.2" width="1.8" height="1" fill="#c9c9c9"/><rect x="11" y="9.2" width="2.2" height="1.1" fill="#b8642a"/><rect x="13.4" y="9.2" width="1.8" height="1" fill="#c9c9c9"/><rect x="11.4" y="11.2" width="1" height="1.1" fill="#888"/><rect x="13" y="11.2" width="2.6" height="1.1" fill="#1ea4e0"/><rect x="9.2" y="14.1" width="1" height="1.1" fill="#888"/><rect x="11" y="14.1" width="2.2" height="1.1" fill="#3a9a2a"/><rect x="13.4" y="14.1" width="1.8" height="1" fill="#c9c9c9"/><path d="M2.6 10.6V8.6Q2.6 7 4.2 7Q5.8 7 5.8 8.6V10.6" fill="#f4f7fa" stroke="#5f7f9c" stroke-width="1.1"/><rect x="1.4" y="10.2" width="5.6" height="4.6" rx="1.1" fill="#dfe7ef" stroke="#46596d" stroke-width="1"/><rect x="3.7" y="12.2" width="1" height="2.2" fill="#46596d"/></svg>
<div style="left:-2px;top:98px;width:365px;height:20px;border:1px solid #b8b08a;border-radius:3px;background:#fff"></div>
<div style="left:347px;top:99px;width:15px;height:18px;border-left:1px solid #d8d2b4;background:linear-gradient(#fdfcf6,#f0ebd0);border-radius:0 3px 3px 0"></div>
<svg style="left:351px;top:105px" width="8.4" height="7.4" viewBox="0 0 8.4 7.4"><path d="M0.6 0.5L7.8 6.9M7.8 0.5L0.6 6.9" stroke="#4e3a00" stroke-width="1.6" fill="none"/></svg>
<span class="t n" style="left:0.4px;top:99px;color:#a9b0c8;letter-spacing:-0.24px">Поиск (Ctrl+Alt+M)</span>
<div style="left:-1px;top:119px;width:364px;height:560px;border:1px solid #b8b08a;background:#fff"></div>
<div style="left:346px;top:120px;width:17px;height:560px;border-left:1px solid #b8b08a;border-right:1px solid #b8b08a;background:#faf9f1"></div>
<div style="left:347px;top:120px;width:15px;height:21px;border-bottom:1px solid #b8b08a;background:linear-gradient(90deg,#fbfaf0,#efead0)"></div>
<div style="left:351px;top:125.5px;width:0;height:0;border-left:3.7px solid transparent;border-right:3.7px solid transparent;border-bottom:7.5px solid #c9c7b8"></div>
<div style="left:347px;top:141px;width:15px;height:15px;border-bottom:1px solid #b8b08a;background:linear-gradient(90deg,#f8f5e4,#ebe5c6)"></div>
<div style="left:352px;top:146px;width:5px;height:5px;border-radius:3px;background:#d9d6c6"></div>
<svg style="left:3px;top:122px" width="14" height="14" viewBox="0 0 14 14"><defs><linearGradient id="bg1" x1="0" y1="0" x2="0" y2="1"><stop offset="0" stop-color="#fdf1b8"/><stop offset="0.5" stop-color="#efc42c"/><stop offset="0.55" stop-color="#e6b416"/><stop offset="1" stop-color="#f8e28a"/></linearGradient></defs><circle cx="7" cy="7.2" r="5.9" fill="url(#bg1)" stroke="#d3b463" stroke-width="0.8"/></svg>
<span class="t n" style="left:24px;top:121px;color:#000;letter-spacing:0.121px;">УправлениеТорговлей</span>
<svg style="left:303px;top:125px" width="9" height="7" viewBox="0 0 9 7"><path d="M0.6 1.6L3.6 5.2L8.2 0.6" fill="none" stroke="#b80c12" stroke-width="1.9"/></svg>
<svg style="left:309px;top:126px" width="7" height="9" viewBox="0 0 7 9"><path d="M1.5 4.6V2.3Q1.5 0.5 3.5 0.5Q5.5 0.5 5.5 2.3V4.6" fill="#ffffff" stroke="#5f7f9c" stroke-width="1.1"/><rect x="0.5" y="4" width="6" height="4.5" rx="1.2" fill="#dbe4ed" stroke="#46596d" stroke-width="1"/><rect x="1.3" y="4.6" width="4.4" height="1.1" fill="#f2f6fa"/><rect x="3" y="6" width="1" height="2.2" fill="#46596d"/></svg>
<svg style="left:326px;top:122px" width="7" height="9" viewBox="0 0 7 9"><path d="M1.5 4.6V2.3Q1.5 0.5 3.5 0.5Q5.5 0.5 5.5 2.3V4.6" fill="#ffffff" stroke="#5f7f9c" stroke-width="1.1"/><rect x="0.5" y="4" width="6" height="4.5" rx="1.2" fill="#dbe4ed" stroke="#46596d" stroke-width="1"/><rect x="1.3" y="4.6" width="4.4" height="1.1" fill="#f2f6fa"/><rect x="3" y="6" width="1" height="2.2" fill="#46596d"/></svg>
<svg style="left:333px;top:128px" width="8" height="10" viewBox="0 0 8 10"><path d="M0 1.6L3.6 0L8 1.8L4.4 3.4Z" fill="#fbe86a"/><path d="M0 1.6L4.4 3.4V9.6L0 7.4Z" fill="#f3d42a"/><path d="M4.4 3.4L8 1.8V7.8L4.4 9.6Z" fill="#d9aa22"/></svg>
<svg style="left:5px;top:144px" width="9" height="9" viewBox="0 0 9 9"><circle cx="4.5" cy="4.5" r="4.3" fill="#fff" stroke="#bcbcbc" stroke-width="0.9"/><rect x="2" y="4" width="5" height="1" fill="#6a6a6a"/></svg>
<svg style="left:22px;top:141.6px" width="14" height="14" viewBox="0 0 14 14"><circle cx="5.2" cy="3.3" r="2.6" fill="#8cc0e6" stroke="#4f92c8" stroke-width="0.9"/><circle cx="3" cy="10.5" r="2.6" fill="#5fd03c" stroke="#2f9a1c" stroke-width="0.9"/><circle cx="10.1" cy="8.4" r="2.6" fill="#c9986e" stroke="#9c6c48" stroke-width="0.9"/></svg>
<span class="t n" style="left:43px;top:140px;color:#000;letter-spacing:-0.294px;">Общие</span>
<svg style="left:24px;top:163px" width="9" height="9" viewBox="0 0 9 9"><circle cx="4.5" cy="4.5" r="4.3" fill="#fff" stroke="#bcbcbc" stroke-width="0.9"/><rect x="2" y="4" width="5" height="1" fill="#6a6a6a"/><rect x="4" y="2" width="1" height="5" fill="#6a6a6a"/></svg>
<svg style="left:40px;top:159px" width="16" height="15" viewBox="0 0 16 15"><path d="M6 1.5L3 7.6M6 1.5L10 7.6M10 7.6L5 13.5M10 7.6L13 13.5" stroke="#4f86ad" stroke-width="1" fill="none"/><rect x="3.5" y="0.40000000000000013" width="5" height="2.4" rx="1.2" fill="#e0ad82" stroke="#ad7446" stroke-width="0.8"/><rect x="0.5" y="6.3999999999999995" width="5" height="2.4" rx="1.2" fill="#e0ad82" stroke="#ad7446" stroke-width="0.8"/><rect x="7.6" y="6.3999999999999995" width="5" height="2.4" rx="1.2" fill="#e0ad82" stroke="#ad7446" stroke-width="0.8"/><rect x="2.5" y="12.3" width="5" height="2.4" rx="1.2" fill="#e0ad82" stroke="#ad7446" stroke-width="0.8"/><rect x="10.5" y="12.3" width="5" height="2.4" rx="1.2" fill="#e0ad82" stroke="#ad7446" stroke-width="0.8"/></svg>
<span class="t n" style="left:62px;top:159px;color:#000;letter-spacing:0.084px;">Подсистемы</span>
<svg style="left:24px;top:182px" width="9" height="9" viewBox="0 0 9 9"><circle cx="4.5" cy="4.5" r="4.3" fill="#fff" stroke="#bcbcbc" stroke-width="0.9"/><rect x="2" y="4" width="5" height="1" fill="#6a6a6a"/></svg>
<svg style="left:41px;top:180px" width="14" height="13" viewBox="0 0 14 13"><rect x="0.5" y="0.5" width="13" height="12" rx="1" fill="#fbfdff" stroke="#869db4"/><rect x="0.5" y="0.3" width="13" height="2" fill="#3b6b96"/><rect x="2" y="3" width="1" height="1" fill="#6f98bd"/><rect x="4" y="3" width="7" height="1" fill="#4d86b5"/><rect x="2" y="5" width="4" height="1" fill="#ee6452"/><rect x="7" y="5" width="4" height="1" fill="#ee6452"/><rect x="4" y="7" width="2" height="1" fill="#ee6452"/><rect x="7" y="7" width="1" height="1" fill="#777"/><rect x="9" y="7" width="2" height="1" fill="#ee6452"/><rect x="5" y="9" width="4" height="1" fill="#555"/><rect x="10" y="9" width="2" height="1" fill="#777"/><rect x="1.5" y="10.5" width="3" height="1.5" fill="#dfe8f0"/></svg>
<span class="t n" style="left:62px;top:178px;color:#000;letter-spacing:-0.192px;">Общие модули</span>
<svg style="left:60px;top:199px" width="14" height="13" viewBox="0 0 14 13"><rect x="0.5" y="0.5" width="13" height="12" rx="1" fill="#fbfdff" stroke="#869db4"/><rect x="0.5" y="0.3" width="13" height="2" fill="#3b6b96"/><rect x="2" y="3" width="1" height="1" fill="#6f98bd"/><rect x="4" y="3" width="7" height="1" fill="#4d86b5"/><rect x="2" y="5" width="4" height="1" fill="#ee6452"/><rect x="7" y="5" width="4" height="1" fill="#ee6452"/><rect x="4" y="7" width="2" height="1" fill="#ee6452"/><rect x="7" y="7" width="1" height="1" fill="#777"/><rect x="9" y="7" width="2" height="1" fill="#ee6452"/><rect x="5" y="9" width="4" height="1" fill="#555"/><rect x="10" y="9" width="2" height="1" fill="#777"/><rect x="1.5" y="10.5" width="3" height="1.5" fill="#dfe8f0"/></svg>
<div style="left:79px;top:196px;width:97px;height:19px;background:#4f68c2;border:1px dotted #c9a83a"></div>
<span class="t n" style="left:81px;top:197px;color:#fff;letter-spacing:0.001px;">CRMЛокализация</span>
<svg style="left:303px;top:201px" width="9" height="7" viewBox="0 0 9 7"><path d="M0.6 1.6L3.6 5.2L8.2 0.6" fill="none" stroke="#b80c12" stroke-width="1.9"/></svg>
<svg style="left:309px;top:202px" width="7" height="9" viewBox="0 0 7 9"><path d="M1.5 4.6V2.3Q1.5 0.5 3.5 0.5Q5.5 0.5 5.5 2.3V4.6" fill="#ffffff" stroke="#5f7f9c" stroke-width="1.1"/><rect x="0.5" y="4" width="6" height="4.5" rx="1.2" fill="#dbe4ed" stroke="#46596d" stroke-width="1"/><rect x="1.3" y="4.6" width="4.4" height="1.1" fill="#f2f6fa"/><rect x="3" y="6" width="1" height="2.2" fill="#46596d"/></svg>
<svg style="left:333px;top:204px" width="8" height="10" viewBox="0 0 8 10"><path d="M0 1.6L3.6 0L8 1.8L4.4 3.4Z" fill="#fbe86a"/><path d="M0 1.6L4.4 3.4V9.6L0 7.4Z" fill="#f3d42a"/><path d="M4.4 3.4L8 1.8V7.8L4.4 9.6Z" fill="#d9aa22"/></svg>
<svg style="left:60px;top:218px" width="14" height="13" viewBox="0 0 14 13"><rect x="0.5" y="0.5" width="13" height="12" rx="1" fill="#fbfdff" stroke="#869db4"/><rect x="0.5" y="0.3" width="13" height="2" fill="#3b6b96"/><rect x="2" y="3" width="1" height="1" fill="#6f98bd"/><rect x="4" y="3" width="7" height="1" fill="#4d86b5"/><rect x="2" y="5" width="4" height="1" fill="#ee6452"/><rect x="7" y="5" width="4" height="1" fill="#ee6452"/><rect x="4" y="7" width="2" height="1" fill="#ee6452"/><rect x="7" y="7" width="1" height="1" fill="#777"/><rect x="9" y="7" width="2" height="1" fill="#ee6452"/><rect x="5" y="9" width="4" height="1" fill="#555"/><rect x="10" y="9" width="2" height="1" fill="#777"/><rect x="1.5" y="10.5" width="3" height="1.5" fill="#dfe8f0"/></svg>
<span class="t n" style="left:81px;top:216px;color:#000;letter-spacing:-0.134px;">GoogleПереводчик</span>
<svg style="left:306px;top:220px" width="7" height="9" viewBox="0 0 7 9"><path d="M1.5 4.6V2.3Q1.5 0.5 3.5 0.5Q5.5 0.5 5.5 2.3V4.6" fill="#ffffff" stroke="#5f7f9c" stroke-width="1.1"/><rect x="0.5" y="4" width="6" height="4.5" rx="1.2" fill="#dbe4ed" stroke="#46596d" stroke-width="1"/><rect x="1.3" y="4.6" width="4.4" height="1.1" fill="#f2f6fa"/><rect x="3" y="6" width="1" height="2.2" fill="#46596d"/></svg>
<svg style="left:326px;top:217px" width="7" height="9" viewBox="0 0 7 9"><path d="M1.5 4.6V2.3Q1.5 0.5 3.5 0.5Q5.5 0.5 5.5 2.3V4.6" fill="#ffffff" stroke="#5f7f9c" stroke-width="1.1"/><rect x="0.5" y="4" width="6" height="4.5" rx="1.2" fill="#dbe4ed" stroke="#46596d" stroke-width="1"/><rect x="1.3" y="4.6" width="4.4" height="1.1" fill="#f2f6fa"/><rect x="3" y="6" width="1" height="2.2" fill="#46596d"/></svg>
<svg style="left:333px;top:223px" width="8" height="10" viewBox="0 0 8 10"><path d="M0 1.6L3.6 0L8 1.8L4.4 3.4Z" fill="#fbe86a"/><path d="M0 1.6L4.4 3.4V9.6L0 7.4Z" fill="#f3d42a"/><path d="M4.4 3.4L8 1.8V7.8L4.4 9.6Z" fill="#d9aa22"/></svg>
<svg style="left:60px;top:237px" width="14" height="13" viewBox="0 0 14 13"><rect x="0.5" y="0.5" width="13" height="12" rx="1" fill="#fbfdff" stroke="#869db4"/><rect x="0.5" y="0.3" width="13" height="2" fill="#3b6b96"/><rect x="2" y="3" width="1" height="1" fill="#6f98bd"/><rect x="4" y="3" width="7" height="1" fill="#4d86b5"/><rect x="2" y="5" width="4" height="1" fill="#ee6452"/><rect x="7" y="5" width="4" height="1" fill="#ee6452"/><rect x="4" y="7" width="2" height="1" fill="#ee6452"/><rect x="7" y="7" width="1" height="1" fill="#777"/><rect x="9" y="7" width="2" height="1" fill="#ee6452"/><rect x="5" y="9" width="4" height="1" fill="#555"/><rect x="10" y="9" width="2" height="1" fill="#777"/><rect x="1.5" y="10.5" width="3" height="1.5" fill="#dfe8f0"/></svg>
<span class="t n" style="left:81px;top:235px;color:#000;letter-spacing:-0.135px;">ZipАрхивы</span>
<svg style="left:306px;top:239px" width="7" height="9" viewBox="0 0 7 9"><path d="M1.5 4.6V2.3Q1.5 0.5 3.5 0.5Q5.5 0.5 5.5 2.3V4.6" fill="#ffffff" stroke="#5f7f9c" stroke-width="1.1"/><rect x="0.5" y="4" width="6" height="4.5" rx="1.2" fill="#dbe4ed" stroke="#46596d" stroke-width="1"/><rect x="1.3" y="4.6" width="4.4" height="1.1" fill="#f2f6fa"/><rect x="3" y="6" width="1" height="2.2" fill="#46596d"/></svg>
<svg style="left:326px;top:236px" width="7" height="9" viewBox="0 0 7 9"><path d="M1.5 4.6V2.3Q1.5 0.5 3.5 0.5Q5.5 0.5 5.5 2.3V4.6" fill="#ffffff" stroke="#5f7f9c" stroke-width="1.1"/><rect x="0.5" y="4" width="6" height="4.5" rx="1.2" fill="#dbe4ed" stroke="#46596d" stroke-width="1"/><rect x="1.3" y="4.6" width="4.4" height="1.1" fill="#f2f6fa"/><rect x="3" y="6" width="1" height="2.2" fill="#46596d"/></svg>
<svg style="left:333px;top:242px" width="8" height="10" viewBox="0 0 8 10"><path d="M0 1.6L3.6 0L8 1.8L4.4 3.4Z" fill="#fbe86a"/><path d="M0 1.6L4.4 3.4V9.6L0 7.4Z" fill="#f3d42a"/><path d="M4.4 3.4L8 1.8V7.8L4.4 9.6Z" fill="#d9aa22"/></svg>
<svg style="left:60px;top:256px" width="14" height="13" viewBox="0 0 14 13"><rect x="0.5" y="0.5" width="13" height="12" rx="1" fill="#fbfdff" stroke="#869db4"/><rect x="0.5" y="0.3" width="13" height="2" fill="#3b6b96"/><rect x="2" y="3" width="1" height="1" fill="#6f98bd"/><rect x="4" y="3" width="7" height="1" fill="#4d86b5"/><rect x="2" y="5" width="4" height="1" fill="#ee6452"/><rect x="7" y="5" width="4" height="1" fill="#ee6452"/><rect x="4" y="7" width="2" height="1" fill="#ee6452"/><rect x="7" y="7" width="1" height="1" fill="#777"/><rect x="9" y="7" width="2" height="1" fill="#ee6452"/><rect x="5" y="9" width="4" height="1" fill="#555"/><rect x="10" y="9" width="2" height="1" fill="#777"/><rect x="1.5" y="10.5" width="3" height="1.5" fill="#dfe8f0"/></svg>
<span class="t n" style="left:81px;top:254px;color:#000;letter-spacing:-0.002px;">АвансовыйОтчетЛокализация</span>
<svg style="left:306px;top:258px" width="7" height="9" viewBox="0 0 7 9"><path d="M1.5 4.6V2.3Q1.5 0.5 3.5 0.5Q5.5 0.5 5.5 2.3V4.6" fill="#ffffff" stroke="#5f7f9c" stroke-width="1.1"/><rect x="0.5" y="4" width="6" height="4.5" rx="1.2" fill="#dbe4ed" stroke="#46596d" stroke-width="1"/><rect x="1.3" y="4.6" width="4.4" height="1.1" fill="#f2f6fa"/><rect x="3" y="6" width="1" height="2.2" fill="#46596d"/></svg>
<svg style="left:326px;top:255px" width="7" height="9" viewBox="0 0 7 9"><path d="M1.5 4.6V2.3Q1.5 0.5 3.5 0.5Q5.5 0.5 5.5 2.3V4.6" fill="#ffffff" stroke="#5f7f9c" stroke-width="1.1"/><rect x="0.5" y="4" width="6" height="4.5" rx="1.2" fill="#dbe4ed" stroke="#46596d" stroke-width="1"/><rect x="1.3" y="4.6" width="4.4" height="1.1" fill="#f2f6fa"/><rect x="3" y="6" width="1" height="2.2" fill="#46596d"/></svg>
<svg style="left:333px;top:261px" width="8" height="10" viewBox="0 0 8 10"><path d="M0 1.6L3.6 0L8 1.8L4.4 3.4Z" fill="#fbe86a"/><path d="M0 1.6L4.4 3.4V9.6L0 7.4Z" fill="#f3d42a"/><path d="M4.4 3.4L8 1.8V7.8L4.4 9.6Z" fill="#d9aa22"/></svg>
<svg style="left:60px;top:275px" width="14" height="13" viewBox="0 0 14 13"><rect x="0.5" y="0.5" width="13" height="12" rx="1" fill="#fbfdff" stroke="#869db4"/><rect x="0.5" y="0.3" width="13" height="2" fill="#3b6b96"/><rect x="2" y="3" width="1" height="1" fill="#6f98bd"/><rect x="4" y="3" width="7" height="1" fill="#4d86b5"/><rect x="2" y="5" width="4" height="1" fill="#ee6452"/><rect x="7" y="5" width="4" height="1" fill="#ee6452"/><rect x="4" y="7" width="2" height="1" fill="#ee6452"/><rect x="7" y="7" width="1" height="1" fill="#777"/><rect x="9" y="7" width="2" height="1" fill="#ee6452"/><rect x="5" y="9" width="4" height="1" fill="#555"/><rect x="10" y="9" width="2" height="1" fill="#777"/><rect x="1.5" y="10.5" width="3" height="1.5" fill="#dfe8f0"/></svg>
<span class="t n" style="left:81px;top:273px;color:#000;letter-spacing:-0.055px;">АвтономнаяРабота</span>
<svg style="left:306px;top:277px" width="7" height="9" viewBox="0 0 7 9"><path d="M1.5 4.6V2.3Q1.5 0.5 3.5 0.5Q5.5 0.5 5.5 2.3V4.6" fill="#ffffff" stroke="#5f7f9c" stroke-width="1.1"/><rect x="0.5" y="4" width="6" height="4.5" rx="1.2" fill="#dbe4ed" stroke="#46596d" stroke-width="1"/><rect x="1.3" y="4.6" width="4.4" height="1.1" fill="#f2f6fa"/><rect x="3" y="6" width="1" height="2.2" fill="#46596d"/></svg>
<svg style="left:326px;top:274px" width="7" height="9" viewBox="0 0 7 9"><path d="M1.5 4.6V2.3Q1.5 0.5 3.5 0.5Q5.5 0.5 5.5 2.3V4.6" fill="#ffffff" stroke="#5f7f9c" stroke-width="1.1"/><rect x="0.5" y="4" width="6" height="4.5" rx="1.2" fill="#dbe4ed" stroke="#46596d" stroke-width="1"/><rect x="1.3" y="4.6" width="4.4" height="1.1" fill="#f2f6fa"/><rect x="3" y="6" width="1" height="2.2" fill="#46596d"/></svg>
<svg style="left:333px;top:280px" width="8" height="10" viewBox="0 0 8 10"><path d="M0 1.6L3.6 0L8 1.8L4.4 3.4Z" fill="#fbe86a"/><path d="M0 1.6L4.4 3.4V9.6L0 7.4Z" fill="#f3d42a"/><path d="M4.4 3.4L8 1.8V7.8L4.4 9.6Z" fill="#d9aa22"/></svg>
<svg style="left:60px;top:294px" width="14" height="13" viewBox="0 0 14 13"><rect x="0.5" y="0.5" width="13" height="12" rx="1" fill="#fbfdff" stroke="#869db4"/><rect x="0.5" y="0.3" width="13" height="2" fill="#3b6b96"/><rect x="2" y="3" width="1" height="1" fill="#6f98bd"/><rect x="4" y="3" width="7" height="1" fill="#4d86b5"/><rect x="2" y="5" width="4" height="1" fill="#ee6452"/><rect x="7" y="5" width="4" height="1" fill="#ee6452"/><rect x="4" y="7" width="2" height="1" fill="#ee6452"/><rect x="7" y="7" width="1" height="1" fill="#777"/><rect x="9" y="7" width="2" height="1" fill="#ee6452"/><rect x="5" y="9" width="4" height="1" fill="#555"/><rect x="10" y="9" width="2" height="1" fill="#777"/><rect x="1.5" y="10.5" width="3" height="1.5" fill="#dfe8f0"/></svg>
<span class="t n" style="left:81px;top:292px;color:#000;letter-spacing:-0.098px;">АвтономнаяРаботаСлужебный</span>
<svg style="left:306px;top:296px" width="7" height="9" viewBox="0 0 7 9"><path d="M1.5 4.6V2.3Q1.5 0.5 3.5 0.5Q5.5 0.5 5.5 2.3V4.6" fill="#ffffff" stroke="#5f7f9c" stroke-width="1.1"/><rect x="0.5" y="4" width="6" height="4.5" rx="1.2" fill="#dbe4ed" stroke="#46596d" stroke-width="1"/><rect x="1.3" y="4.6" width="4.4" height="1.1" fill="#f2f6fa"/><rect x="3" y="6" width="1" height="2.2" fill="#46596d"/></svg>
<svg style="left:326px;top:293px" width="7" height="9" viewBox="0 0 7 9"><path d="M1.5 4.6V2.3Q1.5 0.5 3.5 0.5Q5.5 0.5 5.5 2.3V4.6" fill="#ffffff" stroke="#5f7f9c" stroke-width="1.1"/><rect x="0.5" y="4" width="6" height="4.5" rx="1.2" fill="#dbe4ed" stroke="#46596d" stroke-width="1"/><rect x="1.3" y="4.6" width="4.4" height="1.1" fill="#f2f6fa"/><rect x="3" y="6" width="1" height="2.2" fill="#46596d"/></svg>
<svg style="left:333px;top:299px" width="8" height="10" viewBox="0 0 8 10"><path d="M0 1.6L3.6 0L8 1.8L4.4 3.4Z" fill="#fbe86a"/><path d="M0 1.6L4.4 3.4V9.6L0 7.4Z" fill="#f3d42a"/><path d="M4.4 3.4L8 1.8V7.8L4.4 9.6Z" fill="#d9aa22"/></svg>
<svg style="left:60px;top:313px" width="14" height="13" viewBox="0 0 14 13"><rect x="0.5" y="0.5" width="13" height="12" rx="1" fill="#fbfdff" stroke="#869db4"/><rect x="0.5" y="0.3" width="13" height="2" fill="#3b6b96"/><rect x="2" y="3" width="1" height="1" fill="#6f98bd"/><rect x="4" y="3" width="7" height="1" fill="#4d86b5"/><rect x="2" y="5" width="4" height="1" fill="#ee6452"/><rect x="7" y="5" width="4" height="1" fill="#ee6452"/><rect x="4" y="7" width="2" height="1" fill="#ee6452"/><rect x="7" y="7" width="1" height="1" fill="#777"/><rect x="9" y="7" width="2" height="1" fill="#ee6452"/><rect x="5" y="9" width="4" height="1" fill="#555"/><rect x="10" y="9" width="2" height="1" fill="#777"/><rect x="1.5" y="10.5" width="3" height="1.5" fill="#dfe8f0"/></svg>
<span class="t n" style="left:81px;top:311px;color:#000;letter-spacing:-0.076px;">АвтономнаяРаботаСлужебныйКлиент</span>
<svg style="left:306px;top:315px" width="7" height="9" viewBox="0 0 7 9"><path d="M1.5 4.6V2.3Q1.5 0.5 3.5 0.5Q5.5 0.5 5.5 2.3V4.6" fill="#ffffff" stroke="#5f7f9c" stroke-width="1.1"/><rect x="0.5" y="4" width="6" height="4.5" rx="1.2" fill="#dbe4ed" stroke="#46596d" stroke-width="1"/><rect x="1.3" y="4.6" width="4.4" height="1.1" fill="#f2f6fa"/><rect x="3" y="6" width="1" height="2.2" fill="#46596d"/></svg>
<svg style="left:326px;top:312px" width="7" height="9" viewBox="0 0 7 9"><path d="M1.5 4.6V2.3Q1.5 0.5 3.5 0.5Q5.5 0.5 5.5 2.3V4.6" fill="#ffffff" stroke="#5f7f9c" stroke-width="1.1"/><rect x="0.5" y="4" width="6" height="4.5" rx="1.2" fill="#dbe4ed" stroke="#46596d" stroke-width="1"/><rect x="1.3" y="4.6" width="4.4" height="1.1" fill="#f2f6fa"/><rect x="3" y="6" width="1" height="2.2" fill="#46596d"/></svg>
<svg style="left:333px;top:318px" width="8" height="10" viewBox="0 0 8 10"><path d="M0 1.6L3.6 0L8 1.8L4.4 3.4Z" fill="#fbe86a"/><path d="M0 1.6L4.4 3.4V9.6L0 7.4Z" fill="#f3d42a"/><path d="M4.4 3.4L8 1.8V7.8L4.4 9.6Z" fill="#d9aa22"/></svg>
<svg style="left:60px;top:332px" width="14" height="13" viewBox="0 0 14 13"><rect x="0.5" y="0.5" width="13" height="12" rx="1" fill="#fbfdff" stroke="#869db4"/><rect x="0.5" y="0.3" width="13" height="2" fill="#3b6b96"/><rect x="2" y="3" width="1" height="1" fill="#6f98bd"/><rect x="4" y="3" width="7" height="1" fill="#4d86b5"/><rect x="2" y="5" width="4" height="1" fill="#ee6452"/><rect x="7" y="5" width="4" height="1" fill="#ee6452"/><rect x="4" y="7" width="2" height="1" fill="#ee6452"/><rect x="7" y="7" width="1" height="1" fill="#777"/><rect x="9" y="7" width="2" height="1" fill="#ee6452"/><rect x="5" y="9" width="4" height="1" fill="#555"/><rect x="10" y="9" width="2" height="1" fill="#777"/><rect x="1.5" y="10.5" width="3" height="1.5" fill="#dfe8f0"/></svg>
<span class="t n" style="left:81px;top:330px;color:#000;letter-spacing:-0.056px;">АдминистрированиеКластера</span>
<svg style="left:306px;top:334px" width="7" height="9" viewBox="0 0 7 9"><path d="M1.5 4.6V2.3Q1.5 0.5 3.5 0.5Q5.5 0.5 5.5 2.3V4.6" fill="#ffffff" stroke="#5f7f9c" stroke-width="1.1"/><rect x="0.5" y="4" width="6" height="4.5" rx="1.2" fill="#dbe4ed" stroke="#46596d" stroke-width="1"/><rect x="1.3" y="4.6" width="4.4" height="1.1" fill="#f2f6fa"/><rect x="3" y="6" width="1" height="2.2" fill="#46596d"/></svg>
<svg style="left:326px;top:331px" width="7" height="9" viewBox="0 0 7 9"><path d="M1.5 4.6V2.3Q1.5 0.5 3.5 0.5Q5.5 0.5 5.5 2.3V4.6" fill="#ffffff" stroke="#5f7f9c" stroke-width="1.1"/><rect x="0.5" y="4" width="6" height="4.5" rx="1.2" fill="#dbe4ed" stroke="#46596d" stroke-width="1"/><rect x="1.3" y="4.6" width="4.4" height="1.1" fill="#f2f6fa"/><rect x="3" y="6" width="1" height="2.2" fill="#46596d"/></svg>
<svg style="left:333px;top:337px" width="8" height="10" viewBox="0 0 8 10"><path d="M0 1.6L3.6 0L8 1.8L4.4 3.4Z" fill="#fbe86a"/><path d="M0 1.6L4.4 3.4V9.6L0 7.4Z" fill="#f3d42a"/><path d="M4.4 3.4L8 1.8V7.8L4.4 9.6Z" fill="#d9aa22"/></svg>
<svg style="left:60px;top:351px" width="14" height="13" viewBox="0 0 14 13"><rect x="0.5" y="0.5" width="13" height="12" rx="1" fill="#fbfdff" stroke="#869db4"/><rect x="0.5" y="0.3" width="13" height="2" fill="#3b6b96"/><rect x="2" y="3" width="1" height="1" fill="#6f98bd"/><rect x="4" y="3" width="7" height="1" fill="#4d86b5"/><rect x="2" y="5" width="4" height="1" fill="#ee6452"/><rect x="7" y="5" width="4" height="1" fill="#ee6452"/><rect x="4" y="7" width="2" height="1" fill="#ee6452"/><rect x="7" y="7" width="1" height="1" fill="#777"/><rect x="9" y="7" width="2" height="1" fill="#ee6452"/><rect x="5" y="9" width="4" height="1" fill="#555"/><rect x="10" y="9" width="2" height="1" fill="#777"/><rect x="1.5" y="10.5" width="3" height="1.5" fill="#dfe8f0"/></svg>
<span class="t n" style="left:81px;top:349px;color:#000;letter-spacing:-0.096px;">АдминистрированиеКластераCOM</span>
<svg style="left:306px;top:353px" width="7" height="9" viewBox="0 0 7 9"><path d="M1.5 4.6V2.3Q1.5 0.5 3.5 0.5Q5.5 0.5 5.5 2.3V4.6" fill="#ffffff" stroke="#5f7f9c" stroke-width="1.1"/><rect x="0.5" y="4" width="6" height="4.5" rx="1.2" fill="#dbe4ed" stroke="#46596d" stroke-width="1"/><rect x="1.3" y="4.6" width="4.4" height="1.1" fill="#f2f6fa"/><rect x="3" y="6" width="1" height="2.2" fill="#46596d"/></svg>
<svg style="left:326px;top:350px" width="7" height="9" viewBox="0 0 7 9"><path d="M1.5 4.6V2.3Q1.5 0.5 3.5 0.5Q5.5 0.5 5.5 2.3V4.6" fill="#ffffff" stroke="#5f7f9c" stroke-width="1.1"/><rect x="0.5" y="4" width="6" height="4.5" rx="1.2" fill="#dbe4ed" stroke="#46596d" stroke-width="1"/><rect x="1.3" y="4.6" width="4.4" height="1.1" fill="#f2f6fa"/><rect x="3" y="6" width="1" height="2.2" fill="#46596d"/></svg>
<svg style="left:333px;top:356px" width="8" height="10" viewBox="0 0 8 10"><path d="M0 1.6L3.6 0L8 1.8L4.4 3.4Z" fill="#fbe86a"/><path d="M0 1.6L4.4 3.4V9.6L0 7.4Z" fill="#f3d42a"/><path d="M4.4 3.4L8 1.8V7.8L4.4 9.6Z" fill="#d9aa22"/></svg>
<svg style="left:60px;top:370px" width="14" height="13" viewBox="0 0 14 13"><rect x="0.5" y="0.5" width="13" height="12" rx="1" fill="#fbfdff" stroke="#869db4"/><rect x="0.5" y="0.3" width="13" height="2" fill="#3b6b96"/><rect x="2" y="3" width="1" height="1" fill="#6f98bd"/><rect x="4" y="3" width="7" height="1" fill="#4d86b5"/><rect x="2" y="5" width="4" height="1" fill="#ee6452"/><rect x="7" y="5" width="4" height="1" fill="#ee6452"/><rect x="4" y="7" width="2" height="1" fill="#ee6452"/><rect x="7" y="7" width="1" height="1" fill="#777"/><rect x="9" y="7" width="2" height="1" fill="#ee6452"/><rect x="5" y="9" width="4" height="1" fill="#555"/><rect x="10" y="9" width="2" height="1" fill="#777"/><rect x="1.5" y="10.5" width="3" height="1.5" fill="#dfe8f0"/></svg>
<span class="t n" style="left:81px;top:368px;color:#000;letter-spacing:-0.077px;">АдминистрированиеКластераCOMКлиен<span style="position:static;letter-spacing:-1.05px;margin-left:0.6px">...</span></span>
<svg style="left:306px;top:372px" width="7" height="9" viewBox="0 0 7 9"><path d="M1.5 4.6V2.3Q1.5 0.5 3.5 0.5Q5.5 0.5 5.5 2.3V4.6" fill="#ffffff" stroke="#5f7f9c" stroke-width="1.1"/><rect x="0.5" y="4" width="6" height="4.5" rx="1.2" fill="#dbe4ed" stroke="#46596d" stroke-width="1"/><rect x="1.3" y="4.6" width="4.4" height="1.1" fill="#f2f6fa"/><rect x="3" y="6" width="1" height="2.2" fill="#46596d"/></svg>
<svg style="left:326px;top:369px" width="7" height="9" viewBox="0 0 7 9"><path d="M1.5 4.6V2.3Q1.5 0.5 3.5 0.5Q5.5 0.5 5.5 2.3V4.6" fill="#ffffff" stroke="#5f7f9c" stroke-width="1.1"/><rect x="0.5" y="4" width="6" height="4.5" rx="1.2" fill="#dbe4ed" stroke="#46596d" stroke-width="1"/><rect x="1.3" y="4.6" width="4.4" height="1.1" fill="#f2f6fa"/><rect x="3" y="6" width="1" height="2.2" fill="#46596d"/></svg>
<svg style="left:333px;top:375px" width="8" height="10" viewBox="0 0 8 10"><path d="M0 1.6L3.6 0L8 1.8L4.4 3.4Z" fill="#fbe86a"/><path d="M0 1.6L4.4 3.4V9.6L0 7.4Z" fill="#f3d42a"/><path d="M4.4 3.4L8 1.8V7.8L4.4 9.6Z" fill="#d9aa22"/></svg>
<svg style="left:60px;top:389px" width="14" height="13" viewBox="0 0 14 13"><rect x="0.5" y="0.5" width="13" height="12" rx="1" fill="#fbfdff" stroke="#869db4"/><rect x="0.5" y="0.3" width="13" height="2" fill="#3b6b96"/><rect x="2" y="3" width="1" height="1" fill="#6f98bd"/><rect x="4" y="3" width="7" height="1" fill="#4d86b5"/><rect x="2" y="5" width="4" height="1" fill="#ee6452"/><rect x="7" y="5" width="4" height="1" fill="#ee6452"/><rect x="4" y="7" width="2" height="1" fill="#ee6452"/><rect x="7" y="7" width="1" height="1" fill="#777"/><rect x="9" y="7" width="2" height="1" fill="#ee6452"/><rect x="5" y="9" width="4" height="1" fill="#555"/><rect x="10" y="9" width="2" height="1" fill="#777"/><rect x="1.5" y="10.5" width="3" height="1.5" fill="#dfe8f0"/></svg>
<span class="t n" style="left:81px;top:387px;color:#000;letter-spacing:-0.048px;">АдминистрированиеКластераRAS</span>
<svg style="left:306px;top:391px" width="7" height="9" viewBox="0 0 7 9"><path d="M1.5 4.6V2.3Q1.5 0.5 3.5 0.5Q5.5 0.5 5.5 2.3V4.6" fill="#ffffff" stroke="#5f7f9c" stroke-width="1.1"/><rect x="0.5" y="4" width="6" height="4.5" rx="1.2" fill="#dbe4ed" stroke="#46596d" stroke-width="1"/><rect x="1.3" y="4.6" width="4.4" height="1.1" fill="#f2f6fa"/><rect x="3" y="6" width="1" height="2.2" fill="#46596d"/></svg>
<svg style="left:326px;top:388px" width="7" height="9" viewBox="0 0 7 9"><path d="M1.5 4.6V2.3Q1.5 0.5 3.5 0.5Q5.5 0.5 5.5 2.3V4.6" fill="#ffffff" stroke="#5f7f9c" stroke-width="1.1"/><rect x="0.5" y="4" width="6" height="4.5" rx="1.2" fill="#dbe4ed" stroke="#46596d" stroke-width="1"/><rect x="1.3" y="4.6" width="4.4" height="1.1" fill="#f2f6fa"/><rect x="3" y="6" width="1" height="2.2" fill="#46596d"/></svg>
<svg style="left:333px;top:394px" width="8" height="10" viewBox="0 0 8 10"><path d="M0 1.6L3.6 0L8 1.8L4.4 3.4Z" fill="#fbe86a"/><path d="M0 1.6L4.4 3.4V9.6L0 7.4Z" fill="#f3d42a"/><path d="M4.4 3.4L8 1.8V7.8L4.4 9.6Z" fill="#d9aa22"/></svg>
<svg style="left:60px;top:408px" width="14" height="13" viewBox="0 0 14 13"><rect x="0.5" y="0.5" width="13" height="12" rx="1" fill="#fbfdff" stroke="#869db4"/><rect x="0.5" y="0.3" width="13" height="2" fill="#3b6b96"/><rect x="2" y="3" width="1" height="1" fill="#6f98bd"/><rect x="4" y="3" width="7" height="1" fill="#4d86b5"/><rect x="2" y="5" width="4" height="1" fill="#ee6452"/><rect x="7" y="5" width="4" height="1" fill="#ee6452"/><rect x="4" y="7" width="2" height="1" fill="#ee6452"/><rect x="7" y="7" width="1" height="1" fill="#777"/><rect x="9" y="7" width="2" height="1" fill="#ee6452"/><rect x="5" y="9" width="4" height="1" fill="#555"/><rect x="10" y="9" width="2" height="1" fill="#777"/><rect x="1.5" y="10.5" width="3" height="1.5" fill="#dfe8f0"/></svg>
<span class="t n" style="left:81px;top:406px;color:#000;letter-spacing:-0.051px;">АдминистрированиеКластераRASКлиен<span style="position:static;letter-spacing:-1.05px;margin-left:0.6px">...</span></span>
<svg style="left:306px;top:410px" width="7" height="9" viewBox="0 0 7 9"><path d="M1.5 4.6V2.3Q1.5 0.5 3.5 0.5Q5.5 0.5 5.5 2.3V4.6" fill="#ffffff" stroke="#5f7f9c" stroke-width="1.1"/><rect x="0.5" y="4" width="6" height="4.5" rx="1.2" fill="#dbe4ed" stroke="#46596d" stroke-width="1"/><rect x="1.3" y="4.6" width="4.4" height="1.1" fill="#f2f6fa"/><rect x="3" y="6" width="1" height="2.2" fill="#46596d"/></svg>
<svg style="left:326px;top:407px" width="7" height="9" viewBox="0 0 7 9"><path d="M1.5 4.6V2.3Q1.5 0.5 3.5 0.5Q5.5 0.5 5.5 2.3V4.6" fill="#ffffff" stroke="#5f7f9c" stroke-width="1.1"/><rect x="0.5" y="4" width="6" height="4.5" rx="1.2" fill="#dbe4ed" stroke="#46596d" stroke-width="1"/><rect x="1.3" y="4.6" width="4.4" height="1.1" fill="#f2f6fa"/><rect x="3" y="6" width="1" height="2.2" fill="#46596d"/></svg>
<svg style="left:333px;top:413px" width="8" height="10" viewBox="0 0 8 10"><path d="M0 1.6L3.6 0L8 1.8L4.4 3.4Z" fill="#fbe86a"/><path d="M0 1.6L4.4 3.4V9.6L0 7.4Z" fill="#f3d42a"/><path d="M4.4 3.4L8 1.8V7.8L4.4 9.6Z" fill="#d9aa22"/></svg>
<svg style="left:60px;top:427px" width="14" height="13" viewBox="0 0 14 13"><rect x="0.5" y="0.5" width="13" height="12" rx="1" fill="#fbfdff" stroke="#869db4"/><rect x="0.5" y="0.3" width="13" height="2" fill="#3b6b96"/><rect x="2" y="3" width="1" height="1" fill="#6f98bd"/><rect x="4" y="3" width="7" height="1" fill="#4d86b5"/><rect x="2" y="5" width="4" height="1" fill="#ee6452"/><rect x="7" y="5" width="4" height="1" fill="#ee6452"/><rect x="4" y="7" width="2" height="1" fill="#ee6452"/><rect x="7" y="7" width="1" height="1" fill="#777"/><rect x="9" y="7" width="2" height="1" fill="#ee6452"/><rect x="5" y="9" width="4" height="1" fill="#555"/><rect x="10" y="9" width="2" height="1" fill="#777"/><rect x="1.5" y="10.5" width="3" height="1.5" fill="#dfe8f0"/></svg>
<span class="t n" style="left:81px;top:425px;color:#000;letter-spacing:-0.061px;">АдминистрированиеКластераКлиентСер<span style="position:static;letter-spacing:-1.05px;margin-left:0.6px">...</span></span>
<svg style="left:306px;top:429px" width="7" height="9" viewBox="0 0 7 9"><path d="M1.5 4.6V2.3Q1.5 0.5 3.5 0.5Q5.5 0.5 5.5 2.3V4.6" fill="#ffffff" stroke="#5f7f9c" stroke-width="1.1"/><rect x="0.5" y="4" width="6" height="4.5" rx="1.2" fill="#dbe4ed" stroke="#46596d" stroke-width="1"/><rect x="1.3" y="4.6" width="4.4" height="1.1" fill="#f2f6fa"/><rect x="3" y="6" width="1" height="2.2" fill="#46596d"/></svg>
<svg style="left:326px;top:426px" width="7" height="9" viewBox="0 0 7 9"><path d="M1.5 4.6V2.3Q1.5 0.5 3.5 0.5Q5.5 0.5 5.5 2.3V4.6" fill="#ffffff" stroke="#5f7f9c" stroke-width="1.1"/><rect x="0.5" y="4" width="6" height="4.5" rx="1.2" fill="#dbe4ed" stroke="#46596d" stroke-width="1"/><rect x="1.3" y="4.6" width="4.4" height="1.1" fill="#f2f6fa"/><rect x="3" y="6" width="1" height="2.2" fill="#46596d"/></svg>
<svg style="left:333px;top:432px" width="8" height="10" viewBox="0 0 8 10"><path d="M0 1.6L3.6 0L8 1.8L4.4 3.4Z" fill="#fbe86a"/><path d="M0 1.6L4.4 3.4V9.6L0 7.4Z" fill="#f3d42a"/><path d="M4.4 3.4L8 1.8V7.8L4.4 9.6Z" fill="#d9aa22"/></svg>
<svg style="left:60px;top:446px" width="14" height="13" viewBox="0 0 14 13"><rect x="0.5" y="0.5" width="13" height="12" rx="1" fill="#fbfdff" stroke="#869db4"/><rect x="0.5" y="0.3" width="13" height="2" fill="#3b6b96"/><rect x="2" y="3" width="1" height="1" fill="#6f98bd"/><rect x="4" y="3" width="7" height="1" fill="#4d86b5"/><rect x="2" y="5" width="4" height="1" fill="#ee6452"/><rect x="7" y="5" width="4" height="1" fill="#ee6452"/><rect x="4" y="7" width="2" height="1" fill="#ee6452"/><rect x="7" y="7" width="1" height="1" fill="#777"/><rect x="9" y="7" width="2" height="1" fill="#ee6452"/><rect x="5" y="9" width="4" height="1" fill="#555"/><rect x="10" y="9" width="2" height="1" fill="#777"/><rect x="1.5" y="10.5" width="3" height="1.5" fill="#dfe8f0"/></svg>
<span class="t n" style="left:81px;top:444px;color:#000;letter-spacing:0.001px;">АдресныйКлассификатор</span>
<svg style="left:306px;top:448px" width="7" height="9" viewBox="0 0 7 9"><path d="M1.5 4.6V2.3Q1.5 0.5 3.5 0.5Q5.5 0.5 5.5 2.3V4.6" fill="#ffffff" stroke="#5f7f9c" stroke-width="1.1"/><rect x="0.5" y="4" width="6" height="4.5" rx="1.2" fill="#dbe4ed" stroke="#46596d" stroke-width="1"/><rect x="1.3" y="4.6" width="4.4" height="1.1" fill="#f2f6fa"/><rect x="3" y="6" width="1" height="2.2" fill="#46596d"/></svg>
<svg style="left:326px;top:445px" width="7" height="9" viewBox="0 0 7 9"><path d="M1.5 4.6V2.3Q1.5 0.5 3.5 0.5Q5.5 0.5 5.5 2.3V4.6" fill="#ffffff" stroke="#5f7f9c" stroke-width="1.1"/><rect x="0.5" y="4" width="6" height="4.5" rx="1.2" fill="#dbe4ed" stroke="#46596d" stroke-width="1"/><rect x="1.3" y="4.6" width="4.4" height="1.1" fill="#f2f6fa"/><rect x="3" y="6" width="1" height="2.2" fill="#46596d"/></svg>
<svg style="left:333px;top:451px" width="8" height="10" viewBox="0 0 8 10"><path d="M0 1.6L3.6 0L8 1.8L4.4 3.4Z" fill="#fbe86a"/><path d="M0 1.6L4.4 3.4V9.6L0 7.4Z" fill="#f3d42a"/><path d="M4.4 3.4L8 1.8V7.8L4.4 9.6Z" fill="#d9aa22"/></svg>
<svg style="left:60px;top:465px" width="14" height="13" viewBox="0 0 14 13"><rect x="0.5" y="0.5" width="13" height="12" rx="1" fill="#fbfdff" stroke="#869db4"/><rect x="0.5" y="0.3" width="13" height="2" fill="#3b6b96"/><rect x="2" y="3" width="1" height="1" fill="#6f98bd"/><rect x="4" y="3" width="7" height="1" fill="#4d86b5"/><rect x="2" y="5" width="4" height="1" fill="#ee6452"/><rect x="7" y="5" width="4" height="1" fill="#ee6452"/><rect x="4" y="7" width="2" height="1" fill="#ee6452"/><rect x="7" y="7" width="1" height="1" fill="#777"/><rect x="9" y="7" width="2" height="1" fill="#ee6452"/><rect x="5" y="9" width="4" height="1" fill="#555"/><rect x="10" y="9" width="2" height="1" fill="#777"/><rect x="1.5" y="10.5" width="3" height="1.5" fill="#dfe8f0"/></svg>
<span class="t n" style="left:81px;top:463px;color:#000;letter-spacing:-0.007px;">АдресныйКлассификаторКлиент</span>
<svg style="left:306px;top:467px" width="7" height="9" viewBox="0 0 7 9"><path d="M1.5 4.6V2.3Q1.5 0.5 3.5 0.5Q5.5 0.5 5.5 2.3V4.6" fill="#ffffff" stroke="#5f7f9c" stroke-width="1.1"/><rect x="0.5" y="4" width="6" height="4.5" rx="1.2" fill="#dbe4ed" stroke="#46596d" stroke-width="1"/><rect x="1.3" y="4.6" width="4.4" height="1.1" fill="#f2f6fa"/><rect x="3" y="6" width="1" height="2.2" fill="#46596d"/></svg>
<svg style="left:326px;top:464px" width="7" height="9" viewBox="0 0 7 9"><path d="M1.5 4.6V2.3Q1.5 0.5 3.5 0.5Q5.5 0.5 5.5 2.3V4.6" fill="#ffffff" stroke="#5f7f9c" stroke-width="1.1"/><rect x="0.5" y="4" width="6" height="4.5" rx="1.2" fill="#dbe4ed" stroke="#46596d" stroke-width="1"/><rect x="1.3" y="4.6" width="4.4" height="1.1" fill="#f2f6fa"/><rect x="3" y="6" width="1" height="2.2" fill="#46596d"/></svg>
<svg style="left:333px;top:470px" width="8" height="10" viewBox="0 0 8 10"><path d="M0 1.6L3.6 0L8 1.8L4.4 3.4Z" fill="#fbe86a"/><path d="M0 1.6L4.4 3.4V9.6L0 7.4Z" fill="#f3d42a"/><path d="M4.4 3.4L8 1.8V7.8L4.4 9.6Z" fill="#d9aa22"/></svg>
<svg style="left:60px;top:484px" width="14" height="13" viewBox="0 0 14 13"><rect x="0.5" y="0.5" width="13" height="12" rx="1" fill="#fbfdff" stroke="#869db4"/><rect x="0.5" y="0.3" width="13" height="2" fill="#3b6b96"/><rect x="2" y="3" width="1" height="1" fill="#6f98bd"/><rect x="4" y="3" width="7" height="1" fill="#4d86b5"/><rect x="2" y="5" width="4" height="1" fill="#ee6452"/><rect x="7" y="5" width="4" height="1" fill="#ee6452"/><rect x="4" y="7" width="2" height="1" fill="#ee6452"/><rect x="7" y="7" width="1" height="1" fill="#777"/><rect x="9" y="7" width="2" height="1" fill="#ee6452"/><rect x="5" y="9" width="4" height="1" fill="#555"/><rect x="10" y="9" width="2" height="1" fill="#777"/><rect x="1.5" y="10.5" width="3" height="1.5" fill="#dfe8f0"/></svg>
<span class="t n" style="left:81px;top:482px;color:#000;letter-spacing:0.021px;">АдресныйКлассификаторПовтИсп</span>
<svg style="left:306px;top:486px" width="7" height="9" viewBox="0 0 7 9"><path d="M1.5 4.6V2.3Q1.5 0.5 3.5 0.5Q5.5 0.5 5.5 2.3V4.6" fill="#ffffff" stroke="#5f7f9c" stroke-width="1.1"/><rect x="0.5" y="4" width="6" height="4.5" rx="1.2" fill="#dbe4ed" stroke="#46596d" stroke-width="1"/><rect x="1.3" y="4.6" width="4.4" height="1.1" fill="#f2f6fa"/><rect x="3" y="6" width="1" height="2.2" fill="#46596d"/></svg>
<svg style="left:326px;top:483px" width="7" height="9" viewBox="0 0 7 9"><path d="M1.5 4.6V2.3Q1.5 0.5 3.5 0.5Q5.5 0.5 5.5 2.3V4.6" fill="#ffffff" stroke="#5f7f9c" stroke-width="1.1"/><rect x="0.5" y="4" width="6" height="4.5" rx="1.2" fill="#dbe4ed" stroke="#46596d" stroke-width="1"/><rect x="1.3" y="4.6" width="4.4" height="1.1" fill="#f2f6fa"/><rect x="3" y="6" width="1" height="2.2" fill="#46596d"/></svg>
<svg style="left:333px;top:489px" width="8" height="10" viewBox="0 0 8 10"><path d="M0 1.6L3.6 0L8 1.8L4.4 3.4Z" fill="#fbe86a"/><path d="M0 1.6L4.4 3.4V9.6L0 7.4Z" fill="#f3d42a"/><path d="M4.4 3.4L8 1.8V7.8L4.4 9.6Z" fill="#d9aa22"/></svg>
<svg style="left:60px;top:503px" width="14" height="13" viewBox="0 0 14 13"><rect x="0.5" y="0.5" width="13" height="12" rx="1" fill="#fbfdff" stroke="#869db4"/><rect x="0.5" y="0.3" width="13" height="2" fill="#3b6b96"/><rect x="2" y="3" width="1" height="1" fill="#6f98bd"/><rect x="4" y="3" width="7" height="1" fill="#4d86b5"/><rect x="2" y="5" width="4" height="1" fill="#ee6452"/><rect x="7" y="5" width="4" height="1" fill="#ee6452"/><rect x="4" y="7" width="2" height="1" fill="#ee6452"/><rect x="7" y="7" width="1" height="1" fill="#777"/><rect x="9" y="7" width="2" height="1" fill="#ee6452"/><rect x="5" y="9" width="4" height="1" fill="#555"/><rect x="10" y="9" width="2" height="1" fill="#777"/><rect x="1.5" y="10.5" width="3" height="1.5" fill="#dfe8f0"/></svg>
<span class="t n" style="left:81px;top:501px;color:#000;letter-spacing:-0.072px;">АдресныйКлассификаторСлужебный</span>
<svg style="left:306px;top:505px" width="7" height="9" viewBox="0 0 7 9"><path d="M1.5 4.6V2.3Q1.5 0.5 3.5 0.5Q5.5 0.5 5.5 2.3V4.6" fill="#ffffff" stroke="#5f7f9c" stroke-width="1.1"/><rect x="0.5" y="4" width="6" height="4.5" rx="1.2" fill="#dbe4ed" stroke="#46596d" stroke-width="1"/><rect x="1.3" y="4.6" width="4.4" height="1.1" fill="#f2f6fa"/><rect x="3" y="6" width="1" height="2.2" fill="#46596d"/></svg>
<svg style="left:326px;top:502px" width="7" height="9" viewBox="0 0 7 9"><path d="M1.5 4.6V2.3Q1.5 0.5 3.5 0.5Q5.5 0.5 5.5 2.3V4.6" fill="#ffffff" stroke="#5f7f9c" stroke-width="1.1"/><rect x="0.5" y="4" width="6" height="4.5" rx="1.2" fill="#dbe4ed" stroke="#46596d" stroke-width="1"/><rect x="1.3" y="4.6" width="4.4" height="1.1" fill="#f2f6fa"/><rect x="3" y="6" width="1" height="2.2" fill="#46596d"/></svg>
<svg style="left:333px;top:508px" width="8" height="10" viewBox="0 0 8 10"><path d="M0 1.6L3.6 0L8 1.8L4.4 3.4Z" fill="#fbe86a"/><path d="M0 1.6L4.4 3.4V9.6L0 7.4Z" fill="#f3d42a"/><path d="M4.4 3.4L8 1.8V7.8L4.4 9.6Z" fill="#d9aa22"/></svg>
<svg style="left:60px;top:522px" width="14" height="13" viewBox="0 0 14 13"><rect x="0.5" y="0.5" width="13" height="12" rx="1" fill="#fbfdff" stroke="#869db4"/><rect x="0.5" y="0.3" width="13" height="2" fill="#3b6b96"/><rect x="2" y="3" width="1" height="1" fill="#6f98bd"/><rect x="4" y="3" width="7" height="1" fill="#4d86b5"/><rect x="2" y="5" width="4" height="1" fill="#ee6452"/><rect x="7" y="5" width="4" height="1" fill="#ee6452"/><rect x="4" y="7" width="2" height="1" fill="#ee6452"/><rect x="7" y="7" width="1" height="1" fill="#777"/><rect x="9" y="7" width="2" height="1" fill="#ee6452"/><rect x="5" y="9" width="4" height="1" fill="#555"/><rect x="10" y="9" width="2" height="1" fill="#777"/><rect x="1.5" y="10.5" width="3" height="1.5" fill="#dfe8f0"/></svg>
<span class="t n" style="left:81px;top:520px;color:#000;letter-spacing:0.010px;">АктВыполненныхРаботЛокализация</span>
<svg style="left:306px;top:524px" width="7" height="9" viewBox="0 0 7 9"><path d="M1.5 4.6V2.3Q1.5 0.5 3.5 0.5Q5.5 0.5 5.5 2.3V4.6" fill="#ffffff" stroke="#5f7f9c" stroke-width="1.1"/><rect x="0.5" y="4" width="6" height="4.5" rx="1.2" fill="#dbe4ed" stroke="#46596d" stroke-width="1"/><rect x="1.3" y="4.6" width="4.4" height="1.1" fill="#f2f6fa"/><rect x="3" y="6" width="1" height="2.2" fill="#46596d"/></svg>
<svg style="left:326px;top:521px" width="7" height="9" viewBox="0 0 7 9"><path d="M1.5 4.6V2.3Q1.5 0.5 3.5 0.5Q5.5 0.5 5.5 2.3V4.6" fill="#ffffff" stroke="#5f7f9c" stroke-width="1.1"/><rect x="0.5" y="4" width="6" height="4.5" rx="1.2" fill="#dbe4ed" stroke="#46596d" stroke-width="1"/><rect x="1.3" y="4.6" width="4.4" height="1.1" fill="#f2f6fa"/><rect x="3" y="6" width="1" height="2.2" fill="#46596d"/></svg>
<svg style="left:333px;top:527px" width="8" height="10" viewBox="0 0 8 10"><path d="M0 1.6L3.6 0L8 1.8L4.4 3.4Z" fill="#fbe86a"/><path d="M0 1.6L4.4 3.4V9.6L0 7.4Z" fill="#f3d42a"/><path d="M4.4 3.4L8 1.8V7.8L4.4 9.6Z" fill="#d9aa22"/></svg>
<svg style="left:60px;top:541px" width="14" height="13" viewBox="0 0 14 13"><rect x="0.5" y="0.5" width="13" height="12" rx="1" fill="#fbfdff" stroke="#869db4"/><rect x="0.5" y="0.3" width="13" height="2" fill="#3b6b96"/><rect x="2" y="3" width="1" height="1" fill="#6f98bd"/><rect x="4" y="3" width="7" height="1" fill="#4d86b5"/><rect x="2" y="5" width="4" height="1" fill="#ee6452"/><rect x="7" y="5" width="4" height="1" fill="#ee6452"/><rect x="4" y="7" width="2" height="1" fill="#ee6452"/><rect x="7" y="7" width="1" height="1" fill="#777"/><rect x="9" y="7" width="2" height="1" fill="#ee6452"/><rect x="5" y="9" width="4" height="1" fill="#555"/><rect x="10" y="9" width="2" height="1" fill="#777"/><rect x="1.5" y="10.5" width="3" height="1.5" fill="#dfe8f0"/></svg>
<span class="t n" style="left:81px;top:539px;color:#000;letter-spacing:0.079px;">АктОРасхожденияхПослеОтгрузкиЛока<span style="position:static;letter-spacing:-1.05px;margin-left:0.6px">...</span></span>
<svg style="left:306px;top:543px" width="7" height="9" viewBox="0 0 7 9"><path d="M1.5 4.6V2.3Q1.5 0.5 3.5 0.5Q5.5 0.5 5.5 2.3V4.6" fill="#ffffff" stroke="#5f7f9c" stroke-width="1.1"/><rect x="0.5" y="4" width="6" height="4.5" rx="1.2" fill="#dbe4ed" stroke="#46596d" stroke-width="1"/><rect x="1.3" y="4.6" width="4.4" height="1.1" fill="#f2f6fa"/><rect x="3" y="6" width="1" height="2.2" fill="#46596d"/></svg>
<svg style="left:326px;top:540px" width="7" height="9" viewBox="0 0 7 9"><path d="M1.5 4.6V2.3Q1.5 0.5 3.5 0.5Q5.5 0.5 5.5 2.3V4.6" fill="#ffffff" stroke="#5f7f9c" stroke-width="1.1"/><rect x="0.5" y="4" width="6" height="4.5" rx="1.2" fill="#dbe4ed" stroke="#46596d" stroke-width="1"/><rect x="1.3" y="4.6" width="4.4" height="1.1" fill="#f2f6fa"/><rect x="3" y="6" width="1" height="2.2" fill="#46596d"/></svg>
<svg style="left:333px;top:546px" width="8" height="10" viewBox="0 0 8 10"><path d="M0 1.6L3.6 0L8 1.8L4.4 3.4Z" fill="#fbe86a"/><path d="M0 1.6L4.4 3.4V9.6L0 7.4Z" fill="#f3d42a"/><path d="M4.4 3.4L8 1.8V7.8L4.4 9.6Z" fill="#d9aa22"/></svg>
<svg style="left:60px;top:560px" width="14" height="13" viewBox="0 0 14 13"><rect x="0.5" y="0.5" width="13" height="12" rx="1" fill="#fbfdff" stroke="#869db4"/><rect x="0.5" y="0.3" width="13" height="2" fill="#3b6b96"/><rect x="2" y="3" width="1" height="1" fill="#6f98bd"/><rect x="4" y="3" width="7" height="1" fill="#4d86b5"/><rect x="2" y="5" width="4" height="1" fill="#ee6452"/><rect x="7" y="5" width="4" height="1" fill="#ee6452"/><rect x="4" y="7" width="2" height="1" fill="#ee6452"/><rect x="7" y="7" width="1" height="1" fill="#777"/><rect x="9" y="7" width="2" height="1" fill="#ee6452"/><rect x="5" y="9" width="4" height="1" fill="#555"/><rect x="10" y="9" width="2" height="1" fill="#777"/><rect x="1.5" y="10.5" width="3" height="1.5" fill="#dfe8f0"/></svg>
<span class="t n" style="left:81px;top:558px;color:#000;letter-spacing:0.057px;">АктОРасхожденияхПослеПриемкиЛока<span style="position:static;letter-spacing:-1.05px;margin-left:0.6px">...</span></span>
<svg style="left:306px;top:562px" width="7" height="9" viewBox="0 0 7 9"><path d="M1.5 4.6V2.3Q1.5 0.5 3.5 0.5Q5.5 0.5 5.5 2.3V4.6" fill="#ffffff" stroke="#5f7f9c" stroke-width="1.1"/><rect x="0.5" y="4" width="6" height="4.5" rx="1.2" fill="#dbe4ed" stroke="#46596d" stroke-width="1"/><rect x="1.3" y="4.6" width="4.4" height="1.1" fill="#f2f6fa"/><rect x="3" y="6" width="1" height="2.2" fill="#46596d"/></svg>
<svg style="left:326px;top:559px" width="7" height="9" viewBox="0 0 7 9"><path d="M1.5 4.6V2.3Q1.5 0.5 3.5 0.5Q5.5 0.5 5.5 2.3V4.6" fill="#ffffff" stroke="#5f7f9c" stroke-width="1.1"/><rect x="0.5" y="4" width="6" height="4.5" rx="1.2" fill="#dbe4ed" stroke="#46596d" stroke-width="1"/><rect x="1.3" y="4.6" width="4.4" height="1.1" fill="#f2f6fa"/><rect x="3" y="6" width="1" height="2.2" fill="#46596d"/></svg>
<svg style="left:333px;top:565px" width="8" height="10" viewBox="0 0 8 10"><path d="M0 1.6L3.6 0L8 1.8L4.4 3.4Z" fill="#fbe86a"/><path d="M0 1.6L4.4 3.4V9.6L0 7.4Z" fill="#f3d42a"/><path d="M4.4 3.4L8 1.8V7.8L4.4 9.6Z" fill="#d9aa22"/></svg>
<svg style="left:60px;top:579px" width="14" height="13" viewBox="0 0 14 13"><rect x="0.5" y="0.5" width="13" height="12" rx="1" fill="#fbfdff" stroke="#869db4"/><rect x="0.5" y="0.3" width="13" height="2" fill="#3b6b96"/><rect x="2" y="3" width="1" height="1" fill="#6f98bd"/><rect x="4" y="3" width="7" height="1" fill="#4d86b5"/><rect x="2" y="5" width="4" height="1" fill="#ee6452"/><rect x="7" y="5" width="4" height="1" fill="#ee6452"/><rect x="4" y="7" width="2" height="1" fill="#ee6452"/><rect x="7" y="7" width="1" height="1" fill="#777"/><rect x="9" y="7" width="2" height="1" fill="#ee6452"/><rect x="5" y="9" width="4" height="1" fill="#555"/><rect x="10" y="9" width="2" height="1" fill="#777"/><rect x="1.5" y="10.5" width="3" height="1.5" fill="#dfe8f0"/></svg>
<span class="t n" style="left:81px;top:577px;color:#000;letter-spacing:0.032px;">АкцизныеМаркиВызовСервера</span>
<svg style="left:306px;top:581px" width="7" height="9" viewBox="0 0 7 9"><path d="M1.5 4.6V2.3Q1.5 0.5 3.5 0.5Q5.5 0.5 5.5 2.3V4.6" fill="#ffffff" stroke="#5f7f9c" stroke-width="1.1"/><rect x="0.5" y="4" width="6" height="4.5" rx="1.2" fill="#dbe4ed" stroke="#46596d" stroke-width="1"/><rect x="1.3" y="4.6" width="4.4" height="1.1" fill="#f2f6fa"/><rect x="3" y="6" width="1" height="2.2" fill="#46596d"/></svg>
<svg style="left:326px;top:578px" width="7" height="9" viewBox="0 0 7 9"><path d="M1.5 4.6V2.3Q1.5 0.5 3.5 0.5Q5.5 0.5 5.5 2.3V4.6" fill="#ffffff" stroke="#5f7f9c" stroke-width="1.1"/><rect x="0.5" y="4" width="6" height="4.5" rx="1.2" fill="#dbe4ed" stroke="#46596d" stroke-width="1"/><rect x="1.3" y="4.6" width="4.4" height="1.1" fill="#f2f6fa"/><rect x="3" y="6" width="1" height="2.2" fill="#46596d"/></svg>
<svg style="left:333px;top:584px" width="8" height="10" viewBox="0 0 8 10"><path d="M0 1.6L3.6 0L8 1.8L4.4 3.4Z" fill="#fbe86a"/><path d="M0 1.6L4.4 3.4V9.6L0 7.4Z" fill="#f3d42a"/><path d="M4.4 3.4L8 1.8V7.8L4.4 9.6Z" fill="#d9aa22"/></svg>
<svg style="left:60px;top:598px" width="14" height="13" viewBox="0 0 14 13"><rect x="0.5" y="0.5" width="13" height="12" rx="1" fill="#fbfdff" stroke="#869db4"/><rect x="0.5" y="0.3" width="13" height="2" fill="#3b6b96"/><rect x="2" y="3" width="1" height="1" fill="#6f98bd"/><rect x="4" y="3" width="7" height="1" fill="#4d86b5"/><rect x="2" y="5" width="4" height="1" fill="#ee6452"/><rect x="7" y="5" width="4" height="1" fill="#ee6452"/><rect x="4" y="7" width="2" height="1" fill="#ee6452"/><rect x="7" y="7" width="1" height="1" fill="#777"/><rect x="9" y="7" width="2" height="1" fill="#ee6452"/><rect x="5" y="9" width="4" height="1" fill="#555"/><rect x="10" y="9" width="2" height="1" fill="#777"/><rect x="1.5" y="10.5" width="3" height="1.5" fill="#dfe8f0"/></svg>
<span class="t n" style="left:81px;top:596px;color:#000;letter-spacing:0.052px;">АкцизныеМаркиЕГАИС</span>
<svg style="left:306px;top:600px" width="7" height="9" viewBox="0 0 7 9"><path d="M1.5 4.6V2.3Q1.5 0.5 3.5 0.5Q5.5 0.5 5.5 2.3V4.6" fill="#ffffff" stroke="#5f7f9c" stroke-width="1.1"/><rect x="0.5" y="4" width="6" height="4.5" rx="1.2" fill="#dbe4ed" stroke="#46596d" stroke-width="1"/><rect x="1.3" y="4.6" width="4.4" height="1.1" fill="#f2f6fa"/><rect x="3" y="6" width="1" height="2.2" fill="#46596d"/></svg>
<svg style="left:326px;top:597px" width="7" height="9" viewBox="0 0 7 9"><path d="M1.5 4.6V2.3Q1.5 0.5 3.5 0.5Q5.5 0.5 5.5 2.3V4.6" fill="#ffffff" stroke="#5f7f9c" stroke-width="1.1"/><rect x="0.5" y="4" width="6" height="4.5" rx="1.2" fill="#dbe4ed" stroke="#46596d" stroke-width="1"/><rect x="1.3" y="4.6" width="4.4" height="1.1" fill="#f2f6fa"/><rect x="3" y="6" width="1" height="2.2" fill="#46596d"/></svg>
<svg style="left:333px;top:603px" width="8" height="10" viewBox="0 0 8 10"><path d="M0 1.6L3.6 0L8 1.8L4.4 3.4Z" fill="#fbe86a"/><path d="M0 1.6L4.4 3.4V9.6L0 7.4Z" fill="#f3d42a"/><path d="M4.4 3.4L8 1.8V7.8L4.4 9.6Z" fill="#d9aa22"/></svg>
<svg style="left:60px;top:617px" width="14" height="13" viewBox="0 0 14 13"><rect x="0.5" y="0.5" width="13" height="12" rx="1" fill="#fbfdff" stroke="#869db4"/><rect x="0.5" y="0.3" width="13" height="2" fill="#3b6b96"/><rect x="2" y="3" width="1" height="1" fill="#6f98bd"/><rect x="4" y="3" width="7" height="1" fill="#4d86b5"/><rect x="2" y="5" width="4" height="1" fill="#ee6452"/><rect x="7" y="5" width="4" height="1" fill="#ee6452"/><rect x="4" y="7" width="2" height="1" fill="#ee6452"/><rect x="7" y="7" width="1" height="1" fill="#777"/><rect x="9" y="7" width="2" height="1" fill="#ee6452"/><rect x="5" y="9" width="4" height="1" fill="#555"/><rect x="10" y="9" width="2" height="1" fill="#777"/><rect x="1.5" y="10.5" width="3" height="1.5" fill="#dfe8f0"/></svg>
<span class="t n" style="left:81px;top:615px;color:#000;letter-spacing:0.039px;">АкцизныеМаркиЕГАИСКлиент</span>
<svg style="left:306px;top:619px" width="7" height="9" viewBox="0 0 7 9"><path d="M1.5 4.6V2.3Q1.5 0.5 3.5 0.5Q5.5 0.5 5.5 2.3V4.6" fill="#ffffff" stroke="#5f7f9c" stroke-width="1.1"/><rect x="0.5" y="4" width="6" height="4.5" rx="1.2" fill="#dbe4ed" stroke="#46596d" stroke-width="1"/><rect x="1.3" y="4.6" width="4.4" height="1.1" fill="#f2f6fa"/><rect x="3" y="6" width="1" height="2.2" fill="#46596d"/></svg>
<svg style="left:326px;top:616px" width="7" height="9" viewBox="0 0 7 9"><path d="M1.5 4.6V2.3Q1.5 0.5 3.5 0.5Q5.5 0.5 5.5 2.3V4.6" fill="#ffffff" stroke="#5f7f9c" stroke-width="1.1"/><rect x="0.5" y="4" width="6" height="4.5" rx="1.2" fill="#dbe4ed" stroke="#46596d" stroke-width="1"/><rect x="1.3" y="4.6" width="4.4" height="1.1" fill="#f2f6fa"/><rect x="3" y="6" width="1" height="2.2" fill="#46596d"/></svg>
<svg style="left:333px;top:622px" width="8" height="10" viewBox="0 0 8 10"><path d="M0 1.6L3.6 0L8 1.8L4.4 3.4Z" fill="#fbe86a"/><path d="M0 1.6L4.4 3.4V9.6L0 7.4Z" fill="#f3d42a"/><path d="M4.4 3.4L8 1.8V7.8L4.4 9.6Z" fill="#d9aa22"/></svg>
<svg style="left:60px;top:636px" width="14" height="13" viewBox="0 0 14 13"><rect x="0.5" y="0.5" width="13" height="12" rx="1" fill="#fbfdff" stroke="#869db4"/><rect x="0.5" y="0.3" width="13" height="2" fill="#3b6b96"/><rect x="2" y="3" width="1" height="1" fill="#6f98bd"/><rect x="4" y="3" width="7" height="1" fill="#4d86b5"/><rect x="2" y="5" width="4" height="1" fill="#ee6452"/><rect x="7" y="5" width="4" height="1" fill="#ee6452"/><rect x="4" y="7" width="2" height="1" fill="#ee6452"/><rect x="7" y="7" width="1" height="1" fill="#777"/><rect x="9" y="7" width="2" height="1" fill="#ee6452"/><rect x="5" y="9" width="4" height="1" fill="#555"/><rect x="10" y="9" width="2" height="1" fill="#777"/><rect x="1.5" y="10.5" width="3" height="1.5" fill="#dfe8f0"/></svg>
<span class="t n" style="left:81px;top:634px;color:#000;letter-spacing:0.012px;">АкцизныеМаркиЕГАИСПереопределяем<span style="position:static;letter-spacing:-1.05px;margin-left:0.6px">...</span></span>
<svg style="left:306px;top:638px" width="7" height="9" viewBox="0 0 7 9"><path d="M1.5 4.6V2.3Q1.5 0.5 3.5 0.5Q5.5 0.5 5.5 2.3V4.6" fill="#ffffff" stroke="#5f7f9c" stroke-width="1.1"/><rect x="0.5" y="4" width="6" height="4.5" rx="1.2" fill="#dbe4ed" stroke="#46596d" stroke-width="1"/><rect x="1.3" y="4.6" width="4.4" height="1.1" fill="#f2f6fa"/><rect x="3" y="6" width="1" height="2.2" fill="#46596d"/></svg>
<svg style="left:326px;top:635px" width="7" height="9" viewBox="0 0 7 9"><path d="M1.5 4.6V2.3Q1.5 0.5 3.5 0.5Q5.5 0.5 5.5 2.3V4.6" fill="#ffffff" stroke="#5f7f9c" stroke-width="1.1"/><rect x="0.5" y="4" width="6" height="4.5" rx="1.2" fill="#dbe4ed" stroke="#46596d" stroke-width="1"/><rect x="1.3" y="4.6" width="4.4" height="1.1" fill="#f2f6fa"/><rect x="3" y="6" width="1" height="2.2" fill="#46596d"/></svg>
<svg style="left:333px;top:641px" width="8" height="10" viewBox="0 0 8 10"><path d="M0 1.6L3.6 0L8 1.8L4.4 3.4Z" fill="#fbe86a"/><path d="M0 1.6L4.4 3.4V9.6L0 7.4Z" fill="#f3d42a"/><path d="M4.4 3.4L8 1.8V7.8L4.4 9.6Z" fill="#d9aa22"/></svg>
<svg style="left:60px;top:655px" width="14" height="13" viewBox="0 0 14 13"><rect x="0.5" y="0.5" width="13" height="12" rx="1" fill="#fbfdff" stroke="#869db4"/><rect x="0.5" y="0.3" width="13" height="2" fill="#3b6b96"/><rect x="2" y="3" width="1" height="1" fill="#6f98bd"/><rect x="4" y="3" width="7" height="1" fill="#4d86b5"/><rect x="2" y="5" width="4" height="1" fill="#ee6452"/><rect x="7" y="5" width="4" height="1" fill="#ee6452"/><rect x="4" y="7" width="2" height="1" fill="#ee6452"/><rect x="7" y="7" width="1" height="1" fill="#777"/><rect x="9" y="7" width="2" height="1" fill="#ee6452"/><rect x="5" y="9" width="4" height="1" fill="#555"/><rect x="10" y="9" width="2" height="1" fill="#777"/><rect x="1.5" y="10.5" width="3" height="1.5" fill="#dfe8f0"/></svg>
<span class="t n" style="left:81px;top:653px;color:#000;letter-spacing:0.124px;">АкцизныеМаркиЕГАИСУТ</span>
<svg style="left:306px;top:657px" width="7" height="9" viewBox="0 0 7 9"><path d="M1.5 4.6V2.3Q1.5 0.5 3.5 0.5Q5.5 0.5 5.5 2.3V4.6" fill="#ffffff" stroke="#5f7f9c" stroke-width="1.1"/><rect x="0.5" y="4" width="6" height="4.5" rx="1.2" fill="#dbe4ed" stroke="#46596d" stroke-width="1"/><rect x="1.3" y="4.6" width="4.4" height="1.1" fill="#f2f6fa"/><rect x="3" y="6" width="1" height="2.2" fill="#46596d"/></svg>
<svg style="left:326px;top:654px" width="7" height="9" viewBox="0 0 7 9"><path d="M1.5 4.6V2.3Q1.5 0.5 3.5 0.5Q5.5 0.5 5.5 2.3V4.6" fill="#ffffff" stroke="#5f7f9c" stroke-width="1.1"/><rect x="0.5" y="4" width="6" height="4.5" rx="1.2" fill="#dbe4ed" stroke="#46596d" stroke-width="1"/><rect x="1.3" y="4.6" width="4.4" height="1.1" fill="#f2f6fa"/><rect x="3" y="6" width="1" height="2.2" fill="#46596d"/></svg>
<svg style="left:333px;top:660px" width="8" height="10" viewBox="0 0 8 10"><path d="M0 1.6L3.6 0L8 1.8L4.4 3.4Z" fill="#fbe86a"/><path d="M0 1.6L4.4 3.4V9.6L0 7.4Z" fill="#f3d42a"/><path d="M4.4 3.4L8 1.8V7.8L4.4 9.6Z" fill="#d9aa22"/></svg>
<div style="left:367px;top:56px;width:570px;height:630px;background:#d8d2bc"></div>
<div style="left:367px;top:56px;width:2px;height:620px;background:#707070"></div>
<div style="left:367px;top:56px;width:570px;height:2px;background:#707070"></div>
<div style="left:369px;top:58px;width:570px;height:560px;background:#b4b4b4;border-left:1px solid #fafafa;border-top:1px solid #fafafa"></div>
<div style="left:369px;top:618px;width:570px;height:1px;background:#707070"></div>
<svg style="left:376px;top:64px" width="13" height="14" viewBox="0 0 13 14"><path d="M0 1.5H7.4M0 3.5H6.4M0 5.5H5.4M0 7.5H4.4M0 9.5H3" stroke="#6a6a6a" stroke-width="1.1"/><path d="M9.6 1.5H12.3V13.3H2.2V11.2" fill="none" stroke="#6a6a6a" stroke-width="1"/></svg>
<span class="t" style="left:394px;top:62px;font-size:12px;font-weight:bold;color:#626262;letter-spacing:-0.06px">Общий модуль CRMЛокализация: Модуль</span>
<div style="left:372px;top:80px;width:560px;height:536px;border-left:1px solid #707070;border-top:1px solid #707070;border-bottom:1px solid #707070;background:#fff"></div>
<div style="left:373px;top:81px;width:16px;height:518px;background:#eae7d4;background-image:repeating-conic-gradient(#f6f4e8 0 25%,#dfdbc4 0 50%);background-size:2px 2px"></div>
<div style="left:397px;top:109px;width:1px;height:29px;background:#555"></div>
<div style="left:397px;top:173px;width:1px;height:427px;background:#555"></div>
<div style="left:397px;top:137px;width:5px;height:1px;background:#555"></div>
<div style="left:393px;top:101px;width:9px;height:9px;border:1px solid #555;background:#fff"></div><div style="left:395px;top:105px;width:5px;height:1px;background:#333"></div>
<div style="left:393px;top:165px;width:9px;height:9px;border:1px solid #555;background:#fff"></div><div style="left:395px;top:169px;width:5px;height:1px;background:#333"></div>
<div style="left:393px;top:197px;width:9px;height:9px;border:1px solid #555;background:#fff"></div><div style="left:395px;top:201px;width:5px;height:1px;background:#333"></div>
<div style="left:393px;top:229px;width:9px;height:9px;border:1px solid #555;background:#fff"></div><div style="left:395px;top:233px;width:5px;height:1px;background:#333"></div><div style="left:397px;top:231px;width:1px;height:5px;background:#333"></div>
<div style="left:393px;top:293px;width:9px;height:9px;border:1px solid #555;background:#fff"></div><div style="left:395px;top:297px;width:5px;height:1px;background:#333"></div>
<div style="left:393px;top:325px;width:9px;height:9px;border:1px solid #555;background:#fff"></div><div style="left:395px;top:329px;width:5px;height:1px;background:#333"></div><div style="left:397px;top:327px;width:1px;height:5px;background:#333"></div>
<div style="left:393px;top:389px;width:9px;height:9px;border:1px solid #555;background:#fff"></div><div style="left:395px;top:393px;width:5px;height:1px;background:#333"></div>
<div style="left:393px;top:421px;width:9px;height:9px;border:1px solid #555;background:#fff"></div><div style="left:395px;top:425px;width:5px;height:1px;background:#333"></div><div style="left:397px;top:423px;width:1px;height:5px;background:#333"></div>
<div style="left:393px;top:485px;width:9px;height:9px;border:1px solid #555;background:#fff"></div><div style="left:395px;top:489px;width:5px;height:1px;background:#333"></div>
<div style="left:393px;top:517px;width:9px;height:9px;border:1px solid #555;background:#fff"></div><div style="left:395px;top:521px;width:5px;height:1px;background:#333"></div><div style="left:397px;top:519px;width:1px;height:5px;background:#333"></div>
<div style="left:393px;top:549px;width:9px;height:9px;border:1px solid #555;background:#fff"></div><div style="left:395px;top:553px;width:5px;height:1px;background:#333"></div><div style="left:397px;top:551px;width:1px;height:5px;background:#333"></div>
<div style="left:393px;top:581px;width:9px;height:9px;border:1px solid #555;background:#fff"></div><div style="left:395px;top:585px;width:5px;height:1px;background:#333"></div><div style="left:397px;top:583px;width:1px;height:5px;background:#333"></div>
<div style="left:397px;top:265px;width:5px;height:1px;background:#555"></div>
<div style="left:397px;top:361px;width:5px;height:1px;background:#555"></div>
<div style="left:397px;top:457px;width:5px;height:1px;background:#555"></div>
<div class="code" style="top:99px"><span class="r">Процедура</span> <span class="b">ВставкаСвоегоКода</span><span class="r">()</span></div>
<div class="code" style="top:115px">    <span class="g">//</span></div>
<div class="code" style="top:131px"><span class="r">КонецПроцедуры</span></div>
<div class="code" style="top:163px"><span class="br">#Область ПрограммныйИнтерфейс</span></div>
<div class="code" style="top:195px"><span class="br">#Область Сделки</span></div>
<div class="code" style="top:227px"><span class="r">Процедура</span> <span class="b">ДополнитьЗапросДляРасчетаПотенциалаСделки</span><span class="r">(</span><span class="b">ТекстЗапроса</span><span class="r">)</span></div>
<div class="code" style="top:259px"><span class="br">#КонецОбласти</span></div>
<div class="code" style="top:323px;left:856.5px"><span class="r">(</span><span class="b">ИмяДокум</span></div>
<div class="code" style="top:419px;left:856.5px"><span class="b">аПродажи</span><span class="r">(</span></div>
<div class="code" style="top:515px;left:856.5px"><span class="b">бъект</span><span class="r">,</span> <span class="b">За</span></div>
<div class="code" style="top:547px;left:856.5px"><span class="b">Объект</span><span class="r">,</span> <span class="b">М</span></div>
<div class="code" style="top:579px;left:856.5px"><span class="b">метОбъект</span></div>
<div style="left:373px;top:599px;width:560px;height:16px;border-top:1px solid #bdb58f;background:linear-gradient(#f9f7ea,#f3eed4 45%,#efe8c8 80%,#f3eed6)"></div>
<div style="left:373px;top:600px;width:21px;height:15px;border-right:1px solid #c2ba94;background:linear-gradient(#fbfaf1,#f6f3e0 60%,#f2edd4)"></div>
<div style="left:379px;top:603px;width:0;height:0;border-top:4.5px solid transparent;border-bottom:4.5px solid transparent;border-right:7.5px solid #c7c5b6"></div>
<div style="left:408px;top:273px;width:454px;height:378px;background:#c8c8c8;border-left:1px solid #f4f4f4;border-top:1px solid #f4f4f4;border-right:1px solid #8c8c8c;border-bottom:1px solid #8c8c8c"></div>
<div style="left:412px;top:295px;width:446px;height:352px;background:#fbf9ec"></div>
<span class="t" style="left:417px;top:277px;font-size:12px;font-weight:bold;color:#1c1c22;letter-spacing:-0.06px">Помещение объектов в хранилище конфигурации</span>
<svg style="left:843px;top:281px" width="10" height="10" viewBox="0 0 10 10"><path d="M0.7 0.7L9.3 9.3M9.3 0.7L0.7 9.3" stroke="#2a2a2a" stroke-width="1.9" fill="none"/></svg>
<div style="left:424px;top:307px;width:422px;height:206px;border:1px solid #b8b08a;background:#fff"></div>
<div style="left:425px;top:308px;width:420px;height:21px;background:linear-gradient(#fbf9ee,#f2ecd0);border-bottom:1px solid #d8d0a8"></div>
<div style="left:445px;top:308px;width:1px;height:20px;background:#d3cba6"></div>
<div style="left:466px;top:308px;width:1px;height:20px;background:#d3cba6"></div>
<span class="t n" style="left:470px;top:309px;color:#3a3000">Объект</span>
<div style="left:425px;top:329px;width:420px;height:18px;border:1px dotted #000"></div>
<div class="cb" style="left:429px;top:331px;width:13px;height:13px;border-radius:3px"></div>
<svg style="left:431px;top:333px" width="9" height="9" viewBox="0 0 9 9"><path d="M1 4.2L3.6 7L8 1.6" fill="none" stroke="#2a2a2a" stroke-width="1.9"/></svg>
<div style="left:451px;top:331px;width:14px;height:14px;border:1px solid #d6d6d6;border-right-color:#a4a4a4;border-bottom-color:#a4a4a4;background:#fff"></div>
<svg style="left:452px;top:332px" width="12" height="12" viewBox="0 0 12 12"><path d="M3.9 1.1L9.4 6.6L6.6 9.4L1.1 3.9Z" fill="#2fae22" stroke="#1d7d16" stroke-width="0.8"/><path d="M3.4 3L8 7.6" stroke="#8ee27c" stroke-width="1.1"/><path d="M9.4 6.6L6.6 9.4L10.6 10.6Z" fill="#ffffff" stroke="#1d7d16" stroke-width="0.6"/><path d="M10.8 10.8L9.2 10.2L10.2 9.2Z" fill="#0c3a0c"/></svg>
<svg style="left:472px;top:332px" width="14" height="13" viewBox="0 0 14 13"><rect x="0.5" y="0.5" width="13" height="12" rx="1" fill="#fbfdff" stroke="#869db4"/><rect x="0.5" y="0.3" width="13" height="2" fill="#3b6b96"/><rect x="2" y="3" width="1" height="1" fill="#6f98bd"/><rect x="4" y="3" width="7" height="1" fill="#4d86b5"/><rect x="2" y="5" width="4" height="1" fill="#ee6452"/><rect x="7" y="5" width="4" height="1" fill="#ee6452"/><rect x="4" y="7" width="2" height="1" fill="#ee6452"/><rect x="7" y="7" width="1" height="1" fill="#777"/><rect x="9" y="7" width="2" height="1" fill="#ee6452"/><rect x="5" y="9" width="4" height="1" fill="#555"/><rect x="10" y="9" width="2" height="1" fill="#777"/><rect x="1.5" y="10.5" width="3" height="1.5" fill="#dfe8f0"/></svg>
<span class="t n" style="left:490px;top:330px">ОбщийМодуль.CRMЛокализация</span>
<span class="t n" style="left:424px;top:520px;color:#3a3000">Комментарий:</span>
<div style="left:424px;top:539px;width:407px;height:52px;border:1px solid #b8b08a;border-radius:3px;background:#fff"></div>
<div style="left:830px;top:539px;width:16px;height:19px;border:1px solid #b8b08a;border-left:1px solid #d8d2b4;border-radius:0 3px 3px 0;background:linear-gradient(#fdfcf6,#f0ebd0)"></div>
<div style="left:833px;top:551px;width:2px;height:2px;background:#4a3c00;box-shadow:4px 0 0 #4a3c00,8px 0 0 #4a3c00"></div>
<div class="cb" style="left:425px;top:598px"></div>
<span class="t n" style="left:440px;top:596px;color:#3a3000">Выполнять рекурсивно</span>
<div class="cb" style="left:564px;top:598px"></div>
<span class="t n" style="left:578px;top:596px;color:#3a3000">Оставить захваченными</span>
<div class="btn" style="left:632px;box-shadow:inset 0 0 0 1px #e6dca8"><span>OK</span></div>
<div class="btn" style="left:707px"><span>Отмена</span></div>
<div class="btn" style="left:782px"><span>Справка</span></div>
</body></html>
